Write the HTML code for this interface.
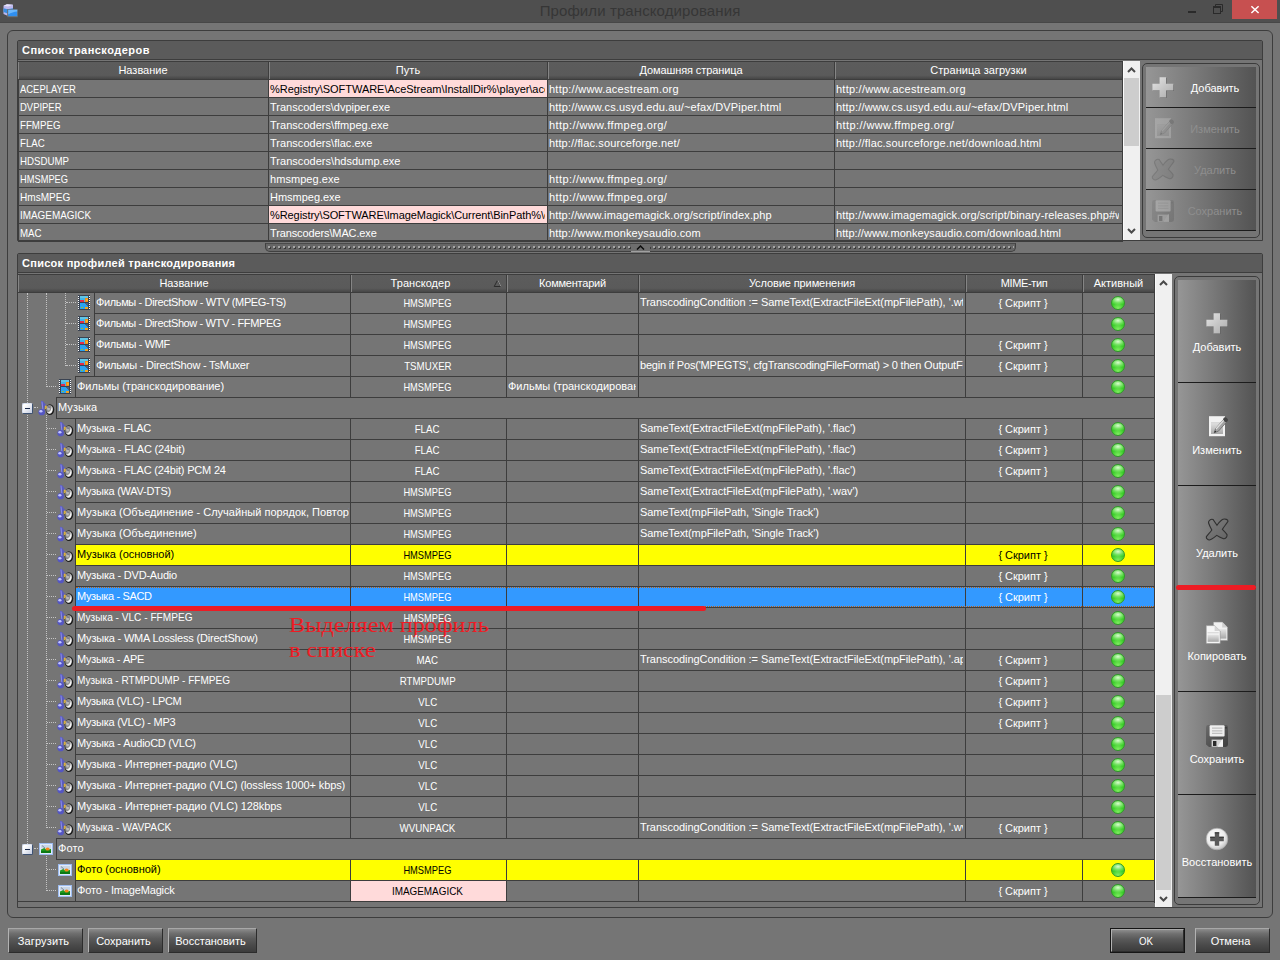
<!DOCTYPE html>
<html lang="ru"><head><meta charset="utf-8"><title>Профили транскодирования</title>
<style>
html,body{margin:0;padding:0}
body{width:1280px;height:960px;overflow:hidden;background:#757575;position:relative;font-family:"Liberation Sans",sans-serif;font-size:11px;color:#fff;line-height:13px}
div,span,svg{position:absolute;box-sizing:border-box}
.t{white-space:nowrap;overflow:hidden;height:14px}
.sx{position:static;display:inline-block}
.titlebar{left:0;top:0;width:1280px;height:23px;background:#4f4f4f;border-bottom:1px solid #474747}
.title{left:0;top:2px;width:1280px;text-align:center;font-size:15px;line-height:18px;color:#363636;height:20px;letter-spacing:.1px}
.gb{left:7px;top:30px;width:1266px;height:888px;border:1px solid #3d3d3d;border-radius:6px}
.panel{border:1px solid #3d3d3d;border-radius:2px 2px 0 0}
.ph{left:0;top:0;height:19px;background:#5b5b5b;border-bottom:1px solid #3d3d3d;font-weight:bold;color:#fff;line-height:18px;padding-left:4px;white-space:nowrap;letter-spacing:.47px}
.hd{background:linear-gradient(#5c5c5c 0,#5a5a5a 78%,#464646 100%);border-left:1px solid #858585;overflow:hidden}
.gl{background:#3d3d3d}
.cell{border:1px solid #3d3d3d;border-right:0;height:22px}
.pink{background:#ffdada}
.yel{background:#ffff00}
.sel{background:#3399ff}
.led{width:14px;height:14px;border-radius:50%;border:1px solid #2f9a28;background:radial-gradient(ellipse 70% 45% at 50% 22%,rgba(225,255,215,.95) 0,rgba(160,245,140,.5) 60%,rgba(255,255,255,0) 100%),radial-gradient(circle at 50% 95%,#84ee64 0,#3ecf2c 45%,#30bc20 100%)}
.sb{background:#f0f0f0;border-left:1px solid #fafafa}
.thumb{background:#cdcdcd}
.bf{border:1px solid #3b3b3b;border-radius:5px}
.bb{background:linear-gradient(90deg,#969696 0,#868686 25%,#797979 45%,#666 72%,#535353 100%)}
.bs{background:#1c1c1c;height:1px}
.btn{height:25px;top:928px;background:linear-gradient(#8c8c8c 0,#707070 18%,#5a5a5a 42%,#4a4a4a 70%,#3c3c3c 100%);border:1px solid;border-color:#a8a8a8 #2c2c2c #2c2c2c #b2b2b2}
.tl{border-left:1px dotted #c4c4c4;width:0}
.th{border-top:1px dotted #c4c4c4;height:0}
.red{background:#ed1c24;border-radius:3px}
.note{left:289px;top:613px;font-family:"Liberation Serif",serif;font-size:20px;line-height:25px;color:#ed1c24;white-space:nowrap;transform:scaleX(1.21);transform-origin:0 0;z-index:1}
.t{z-index:2}
.xb{width:11px;height:11px;border:1px solid;border-color:#d8e0f0 #3c5274 #3c5274 #d8e0f0;border-radius:2px;background:linear-gradient(135deg,#ffffff 20%,#c4cce0)}
</style></head><body>
<svg width="0" height="0" style="left:0;top:0"><defs>
<linearGradient id="dg" x1="0" y1="0" x2="1" y2="1"><stop offset="0" stop-color="#8a8a8a"/><stop offset=".55" stop-color="#e8e8e8"/><stop offset="1" stop-color="#fafafa"/></linearGradient>
<linearGradient id="pg" x1="0" y1="0" x2="1" y2="1"><stop offset="0" stop-color="#e4e4e4"/><stop offset="1" stop-color="#ababab"/></linearGradient>
<linearGradient id="gg" x1="0" y1="0" x2="0" y2="1"><stop offset="0" stop-color="#e6e6e6"/><stop offset="1" stop-color="#a8a8a8"/></linearGradient>
<linearGradient id="xg" x1="0" y1="0" x2="1" y2="1"><stop offset="0" stop-color="#7e7e7e"/><stop offset="1" stop-color="#646464"/></linearGradient>
<linearGradient id="fg" x1="0" y1="0" x2="1" y2="1"><stop offset="0" stop-color="#6a6a6a"/><stop offset="1" stop-color="#3e3e3e"/></linearGradient>
<radialGradient id="rg" cx=".42" cy=".38" r=".7"><stop offset="0" stop-color="#ffffff"/><stop offset=".6" stop-color="#ececec"/><stop offset="1" stop-color="#b4b4b4"/></radialGradient>
</defs></svg>

<div class="titlebar"></div>
<svg style="left:3px;top:3px" width="16" height="16" viewBox="0 0 16 16"><path d="M0.5 2.8 L4 1.3 L10 1.8 L10 11 L4.5 12.8 L0.5 11Z" fill="#bdb8ee"/><path d="M0.5 2.8 L4 1.3 L10 1.8 L5 3.6Z" fill="#e8e4fc"/><path d="M0.5 5.2 L4.5 6.2 L10 5.2 L10 9 L4.5 10.6 L0.5 9Z" fill="#3a8ee0"/><rect x="4.2" y="6.2" width="10.6" height="8" fill="#6e6e6c"/><rect x="5.2" y="6.8" width="9" height="6.4" fill="#2f8ff0"/><path d="M5.2 6.8 H14.2 V8.6 C11 8.8 8 10 5.2 11.5Z" fill="#7ac0ff" opacity=".8"/></svg>
<div class="title">Профили транскодирования</div>
<div style="left:1188px;top:11px;width:8px;height:2px;background:#2a2a2a"></div>
<svg style="left:1212px;top:3px" width="13" height="12" viewBox="0 0 13 12"><path d="M3.5 3 V1.5 H10.5 V8.5 H9" fill="none" stroke="#2a2a2a" stroke-width="1"/><rect x="1.5" y="3.5" width="7" height="7" fill="none" stroke="#2a2a2a" stroke-width="1"/><rect x="1" y="3" width="8" height="2" fill="#2a2a2a"/></svg>
<div style="left:1232px;top:0;width:45px;height:19px;background:#c75050"></div>
<svg style="left:1250px;top:5px" width="10" height="9" viewBox="0 0 10 9"><path d="M1.4 1.2 L8.6 8 M8.6 1.2 L1.4 8" stroke="#fff" stroke-width="1.5"/></svg>
<div class="gb"></div>
<div class="panel" style="left:17px;top:40px;width:1246px;height:201px"><div class="ph" style="width:1244px">Список транскодеров</div></div>
<div class="gl" style="left:18px;top:61px;width:1105px;height:1px"></div>
<div class="hd" style="left:18px;top:62px;width:251px;height:17px"><div class="t" style="left:-1px;top:2px;width:250px;text-align:center;">Название</div></div>
<div class="hd" style="left:269px;top:62px;width:279px;height:17px"><div class="t" style="left:-1px;top:2px;width:278px;text-align:center;letter-spacing:0.08px;">Путь</div></div>
<div class="gl" style="left:268px;top:61px;width:1px;height:18px"></div>
<div class="hd" style="left:548px;top:62px;width:287px;height:17px"><div class="t" style="left:-1px;top:2px;width:286px;text-align:center;letter-spacing:-0.10px;">Домашняя страница</div></div>
<div class="gl" style="left:547px;top:61px;width:1px;height:18px"></div>
<div class="hd" style="left:835px;top:62px;width:288px;height:17px"><div class="t" style="left:-1px;top:2px;width:287px;text-align:center;letter-spacing:0.06px;">Страница загрузки</div></div>
<div class="gl" style="left:834px;top:61px;width:1px;height:18px"></div>
<div class="gl" style="left:18px;top:79px;width:1105px;height:1px"></div>
<div class="gl" style="left:18px;top:79px;width:1px;height:161px"></div>
<div class="gl" style="left:18px;top:97px;width:1105px;height:1px"></div>
<div class="t" style="left:20px;top:83px;width:246px;"><span class="sx" style="transform:scaleX(0.857);transform-origin:0 50%">ACEPLAYER</span></div>
<div class="pink" style="left:269px;top:80px;width:278px;height:17px"></div>
<div class="t" style="left:270px;top:83px;width:275px;color:#000;letter-spacing:-0.04px;">%Registry\SOFTWARE\AceStream\InstallDir%\player\ace_player.exe</div>
<div class="t" style="left:549px;top:83px;width:282px;letter-spacing:0.24px;">http://www.acestream.org</div>
<div class="t" style="left:836px;top:83px;width:283px;letter-spacing:0.24px;">http://www.acestream.org</div>
<div class="gl" style="left:18px;top:115px;width:1105px;height:1px"></div>
<div class="t" style="left:20px;top:101px;width:246px;"><span class="sx" style="transform:scaleX(0.859);transform-origin:0 50%">DVPIPER</span></div>
<div class="t" style="left:270px;top:101px;width:274px;">Transcoders\dvpiper.exe</div>
<div class="t" style="left:549px;top:101px;width:282px;letter-spacing:0.16px;">http://www.cs.usyd.edu.au/~efax/DVPiper.html</div>
<div class="t" style="left:836px;top:101px;width:283px;letter-spacing:0.16px;">http://www.cs.usyd.edu.au/~efax/DVPiper.html</div>
<div class="gl" style="left:18px;top:133px;width:1105px;height:1px"></div>
<div class="t" style="left:20px;top:119px;width:246px;"><span class="sx" style="transform:scaleX(0.882);transform-origin:0 50%">FFMPEG</span></div>
<div class="t" style="left:270px;top:119px;width:274px;letter-spacing:0.03px;">Transcoders\ffmpeg.exe</div>
<div class="t" style="left:549px;top:119px;width:282px;letter-spacing:0.41px;">http://www.ffmpeg.org/</div>
<div class="t" style="left:836px;top:119px;width:283px;letter-spacing:0.41px;">http://www.ffmpeg.org/</div>
<div class="gl" style="left:18px;top:151px;width:1105px;height:1px"></div>
<div class="t" style="left:20px;top:137px;width:246px;"><span class="sx" style="transform:scaleX(0.882);transform-origin:0 50%">FLAC</span></div>
<div class="t" style="left:270px;top:137px;width:274px;letter-spacing:0.03px;">Transcoders\flac.exe</div>
<div class="t" style="left:549px;top:137px;width:282px;letter-spacing:0.13px;">http://flac.sourceforge.net/</div>
<div class="t" style="left:836px;top:137px;width:283px;letter-spacing:0.18px;">http://flac.sourceforge.net/download.html</div>
<div class="gl" style="left:18px;top:169px;width:1105px;height:1px"></div>
<div class="t" style="left:20px;top:155px;width:246px;"><span class="sx" style="transform:scaleX(0.882);transform-origin:0 50%">HDSDUMP</span></div>
<div class="t" style="left:270px;top:155px;width:274px;letter-spacing:0.03px;">Transcoders\hdsdump.exe</div>
<div class="gl" style="left:18px;top:187px;width:1105px;height:1px"></div>
<div class="t" style="left:20px;top:173px;width:246px;"><span class="sx" style="transform:scaleX(0.845);transform-origin:0 50%">HMSMPEG</span></div>
<div class="t" style="left:270px;top:173px;width:274px;letter-spacing:0.06px;">hmsmpeg.exe</div>
<div class="t" style="left:549px;top:173px;width:282px;letter-spacing:0.41px;">http://www.ffmpeg.org/</div>
<div class="gl" style="left:18px;top:205px;width:1105px;height:1px"></div>
<div class="t" style="left:20px;top:191px;width:246px;"><span class="sx" style="transform:scaleX(0.914);transform-origin:0 50%">HmsMPEG</span></div>
<div class="t" style="left:270px;top:191px;width:274px;letter-spacing:-0.02px;">Hmsmpeg.exe</div>
<div class="t" style="left:549px;top:191px;width:282px;letter-spacing:0.41px;">http://www.ffmpeg.org/</div>
<div class="gl" style="left:18px;top:223px;width:1105px;height:1px"></div>
<div class="t" style="left:20px;top:209px;width:246px;"><span class="sx" style="transform:scaleX(0.901);transform-origin:0 50%">IMAGEMAGICK</span></div>
<div class="pink" style="left:269px;top:206px;width:278px;height:17px"></div>
<div class="t" style="left:270px;top:209px;width:275px;color:#000;letter-spacing:-0.08px;">%Registry\SOFTWARE\ImageMagick\Current\BinPath%\convert.exe</div>
<div class="t" style="left:549px;top:209px;width:282px;letter-spacing:0.12px;">http://www.imagemagick.org/script/index.php</div>
<div class="t" style="left:836px;top:209px;width:283px;letter-spacing:0.12px;">http://www.imagemagick.org/script/binary-releases.php#windows</div>
<div class="gl" style="left:18px;top:241px;width:1105px;height:1px"></div>
<div class="t" style="left:20px;top:227px;width:246px;"><span class="sx" style="transform:scaleX(0.882);transform-origin:0 50%">MAC</span></div>
<div class="t" style="left:270px;top:227px;width:274px;letter-spacing:-0.12px;">Transcoders\MAC.exe</div>
<div class="t" style="left:549px;top:227px;width:282px;letter-spacing:0.12px;">http://www.monkeysaudio.com</div>
<div class="t" style="left:836px;top:227px;width:283px;letter-spacing:0.06px;">http://www.monkeysaudio.com/download.html</div>
<div class="gl" style="left:268px;top:80px;width:1px;height:160px"></div>
<div class="gl" style="left:547px;top:80px;width:1px;height:160px"></div>
<div class="gl" style="left:834px;top:80px;width:1px;height:160px"></div>
<div class="gl" style="left:1122px;top:61px;width:1px;height:179px"></div>
<div class="sb" style="left:1123px;top:61px;width:17px;height:179px"></div>
<div class="thumb" style="left:1124px;top:78px;width:15px;height:68px"></div>
<svg style="left:1127px;top:67px" width="9" height="6" viewBox="0 0 9 6"><path d="M1 5 L4.5 1.5 L8 5" fill="none" stroke="#4a4a4a" stroke-width="2"/></svg>
<svg style="left:1127px;top:228px" width="9" height="6" viewBox="0 0 9 6"><path d="M1 1 L4.5 4.5 L8 1" fill="none" stroke="#4a4a4a" stroke-width="2"/></svg>
<div class="bf" style="left:1142px;top:63px;width:118px;height:175px"></div>
<div class="bb" style="left:1146px;top:67px;width:110px;height:40px"></div><div class="bs" style="left:1146px;top:107px;width:110px"></div>
<div class="t" style="left:1175px;top:82px;width:80px;text-align:center;">Добавить</div>
<svg style="left:1151px;top:76px" width="24" height="24" viewBox="0 0 24 24" opacity="1"><path d="M8.6 1.2 H15 V7.8 H22.4 V14.4 H15 V21.4 H8.6 V14.4 H1.4 V7.8 H8.6Z" transform="translate(.5 .7)" fill="#5c5c5c"/><path d="M8.6 1.2 H15 V7.8 H22.4 V14.4 H15 V21.4 H8.6 V14.4 H1.4 V7.8 H8.6Z" fill="url(#pg)"/></svg>
<div class="bb" style="left:1146px;top:108px;width:110px;height:40px"></div><div class="bs" style="left:1146px;top:148px;width:110px"></div>
<div class="t" style="left:1175px;top:123px;width:80px;color:#8e8e8e;text-align:center;">Изменить</div>
<svg style="left:1151px;top:117px" width="24" height="24" viewBox="0 0 24 24" opacity="0.22"><rect x="4" y="1.2" width="16" height="20" fill="#f2f2f2"/><rect x="6" y="7" width="12" height="12" fill="url(#gg)"/><rect x="6" y="7" width="12" height="1.4" fill="#d8d8d8"/><path d="M9.2 17.8 L10.6 13.6 L18.6 4.4 L21.6 7 L13.4 16.2Z" fill="#a4a4a4" stroke="#5c5c5c" stroke-width=".7"/><path d="M11 14 L19 5" stroke="#e0e0e0" stroke-width="1.2"/><ellipse cx="20.6" cy="4.6" rx="2.6" ry="2" transform="rotate(40 20.6 4.6)" fill="#454545"/><path d="M9.2 17.8 L10 15.4 L11.4 16.8Z" fill="#2a2a2a"/></svg>
<div class="bb" style="left:1146px;top:149px;width:110px;height:40px"></div><div class="bs" style="left:1146px;top:189px;width:110px"></div>
<div class="t" style="left:1175px;top:164px;width:80px;color:#8e8e8e;text-align:center;">Удалить</div>
<svg style="left:1151px;top:158px" width="24" height="24" viewBox="0 0 24 24" opacity="0.22"><path d="M4 3 C5 1.5 7 1 8.2 1.6 L12 7.2 C13.6 5 16 2 18 1.2 C20.4 0.6 23 1.6 23 3.2 C21.6 5.6 18.8 9 17.4 11.4 C19 13 21 15 22 16.6 C22.4 18.8 20.4 21 18.6 20.8 C16.4 20 13.6 18.6 11.8 17.4 C9.8 19 7 21.6 4.6 22 C2.6 22 1 20.4 1.4 18.6 C3 16.6 5.4 14 6.8 12 C5.6 9.8 4.2 7 3.6 5 C3.5 4.2 3.6 3.6 4 3Z" fill="url(#xg)" stroke="#303030" stroke-width="1.1"/></svg>
<div class="bb" style="left:1146px;top:190px;width:110px;height:40px"></div><div class="bs" style="left:1146px;top:230px;width:110px"></div>
<div class="t" style="left:1175px;top:205px;width:80px;color:#8e8e8e;text-align:center;">Сохранить</div>
<svg style="left:1151px;top:199px" width="24" height="24" viewBox="0 0 24 24" opacity="0.22"><path d="M1 3.4 Q1 1 3.4 1 H20.6 Q23 1 23 3.4 V20.6 Q23 23 20.6 23 H4 L1 20.4Z" fill="url(#fg)"/><rect x="4.6" y="1.2" width="15" height="11.4" rx="1" fill="#efefef"/><path d="M7 4.2 H17.4 M7 6.8 H17.4 M7 9.4 H17.4" stroke="#c0c0c0" stroke-width="1.2"/><rect x="6.6" y="15.6" width="11.4" height="7.2" fill="#d4d4d4"/><rect x="8" y="17" width="3.4" height="5" fill="#2a2a2a"/><path d="M12.6 22.8 L17 15.6 H18 V22.8Z" fill="#f4f4f4"/><rect x="20.4" y="3" width="1.2" height="1.6" fill="#2e2e2e"/></svg>
<div style="left:265px;top:243px;width:751px;height:9px;background:#666;border:1px solid #404040;border-top-color:#4a4a4a;border-radius:0 0 5px 5px"></div>
<svg style="left:267px;top:245px" width="747" height="5"><defs><pattern id="dp" width="5" height="5" patternUnits="userSpaceOnUse"><rect x="2" y="2" width="2" height="2" fill="#3a3a3a"/><rect x="1" y="1" width="2" height="2" fill="#a4a4a4"/></pattern></defs><rect width="747" height="5" fill="url(#dp)"/></svg>
<div style="left:631px;top:244px;width:19px;height:8px;background:#6e6e6e;border-bottom:1px solid #a0a0a0"></div>
<svg style="left:636px;top:245px" width="9" height="5" viewBox="0 0 9 5"><path d="M1 4.6 L4.5 1 L8 4.6" fill="none" stroke="#0c0c0c" stroke-width="1.4"/></svg>
<div class="panel" style="left:17px;top:253px;width:1246px;height:655px"><div class="ph" style="width:1244px;letter-spacing:.27px">Список профилей транскодирования</div></div>
<div class="gl" style="left:18px;top:274px;width:1137px;height:1px"></div>
<div class="hd" style="left:18px;top:275px;width:333px;height:17px"><div class="t" style="left:-1px;top:2px;width:332px;text-align:center;">Название</div></div>
<div class="hd" style="left:351px;top:275px;width:156px;height:17px"><div class="t" style="left:-9px;top:2px;width:155px;text-align:center;letter-spacing:0.04px;">Транскодер</div><svg style="left:141px;top:4px" width="9" height="9" viewBox="0 0 9 9"><path d="M4.5 1.2 L7.8 7.5 H1.2Z" fill="none" stroke="#2c2c2c" stroke-width="1"/><path d="M4.8 1.2 L8 7.5" stroke="#8c8c8c" stroke-width="1" fill="none"/></svg></div>
<div class="gl" style="left:350px;top:274px;width:1px;height:18px"></div>
<div class="hd" style="left:507px;top:275px;width:132px;height:17px"><div class="t" style="left:-1px;top:2px;width:131px;text-align:center;letter-spacing:-0.22px;">Комментарий</div></div>
<div class="gl" style="left:506px;top:274px;width:1px;height:18px"></div>
<div class="hd" style="left:639px;top:275px;width:327px;height:17px"><div class="t" style="left:-1px;top:2px;width:326px;text-align:center;letter-spacing:-0.10px;">Условие применения</div></div>
<div class="gl" style="left:638px;top:274px;width:1px;height:18px"></div>
<div class="hd" style="left:966px;top:275px;width:117px;height:17px"><div class="t" style="left:-1px;top:2px;width:116px;text-align:center;letter-spacing:-0.36px;">MIME-тип</div></div>
<div class="gl" style="left:965px;top:274px;width:1px;height:18px"></div>
<div class="hd" style="left:1083px;top:275px;width:72px;height:17px"><div class="t" style="left:-1px;top:2px;width:71px;text-align:center;">Активный</div></div>
<div class="gl" style="left:1082px;top:274px;width:1px;height:18px"></div>
<div class="gl" style="left:18px;top:292px;width:1137px;height:1px"></div>
<div class="tl" style="left:27px;top:293px;height:110px"></div>
<div class="tl" style="left:27px;top:415px;height:429px"></div>
<div class="tl" style="left:46px;top:293px;height:94px"></div>
<div class="tl" style="left:46px;top:415px;height:413px"></div>
<div class="tl" style="left:46px;top:856px;height:35px"></div>
<div class="tl" style="left:65px;top:293px;height:73px"></div>
<div class="th" style="left:66px;top:302px;width:10px"></div>
<svg style="left:78px;top:295px" width="12" height="15" viewBox="0 0 12 15" shape-rendering="crispEdges"><rect width="12" height="15" fill="#3a4352"/><rect x="2" y="1" width="8" height="6" fill="#42b4ea"/><rect x="2" y="1" width="8" height="2" fill="#62c6e6"/><rect x="2" y="5" width="4" height="2" fill="#e22c48"/><rect x="7" y="3" width="3" height="4" fill="#f28c16"/><rect x="8" y="4" width="2" height="2" fill="#ffb020"/><rect x="2" y="8" width="8" height="6" fill="#2aa2f0"/><rect x="7" y="8" width="3" height="1" fill="#4a5f7c"/><rect x="8" y="9" width="2" height="1" fill="#4a5f7c"/><rect x="9" y="10" width="1" height="1" fill="#4a5f7c"/><rect x="7" y="12" width="3" height="2" fill="#f4a21a"/><rect x="3" y="12" width="2" height="1" fill="#8cbc48"/><g fill="#ffffff"><rect x="0" y="1" width="1" height="1"/><rect x="0" y="3" width="1" height="1"/><rect x="0" y="5" width="1" height="1"/><rect x="0" y="7" width="1" height="1"/><rect x="0" y="9" width="1" height="1"/><rect x="0" y="11" width="1" height="1"/><rect x="0" y="13" width="1" height="1"/><rect x="11" y="1" width="1" height="1"/><rect x="11" y="3" width="1" height="1"/><rect x="11" y="5" width="1" height="1"/><rect x="11" y="7" width="1" height="1"/><rect x="11" y="9" width="1" height="1"/><rect x="11" y="11" width="1" height="1"/><rect x="11" y="13" width="1" height="1"/></g></svg>
<div class="cell " style="left:94px;top:292px;width:257px"></div>
<div class="t" style="left:96px;top:296px;width:253px;letter-spacing:-0.37px;">Фильмы - DirectShow - WTV (MPEG-TS)</div>
<div class="cell " style="left:350px;top:292px;width:157px"></div>
<div class="t" style="left:349px;top:297px;width:157px;text-align:center;"><span class="sx" style="transform:scaleX(0.845);transform-origin:50% 50%">HMSMPEG</span></div>
<div class="cell " style="left:506px;top:292px;width:133px"></div>
<div class="cell " style="left:638px;top:292px;width:328px"></div>
<div class="t" style="left:640px;top:296px;width:323px;letter-spacing:-0.05px;">TranscodingCondition := SameText(ExtractFileExt(mpFilePath), &#x27;.wtv&#x27;)</div>
<div class="cell " style="left:965px;top:292px;width:118px"></div>
<div class="t" style="left:964px;top:297px;width:118px;text-align:center;letter-spacing:-0.03px;">{ Скрипт }</div>
<div class="cell " style="left:1082px;top:292px;width:73px"></div>
<span class="led" style="left:1111px;top:296px"></span>
<div class="th" style="left:66px;top:323px;width:10px"></div>
<svg style="left:78px;top:316px" width="12" height="15" viewBox="0 0 12 15" shape-rendering="crispEdges"><rect width="12" height="15" fill="#3a4352"/><rect x="2" y="1" width="8" height="6" fill="#42b4ea"/><rect x="2" y="1" width="8" height="2" fill="#62c6e6"/><rect x="2" y="5" width="4" height="2" fill="#e22c48"/><rect x="7" y="3" width="3" height="4" fill="#f28c16"/><rect x="8" y="4" width="2" height="2" fill="#ffb020"/><rect x="2" y="8" width="8" height="6" fill="#2aa2f0"/><rect x="7" y="8" width="3" height="1" fill="#4a5f7c"/><rect x="8" y="9" width="2" height="1" fill="#4a5f7c"/><rect x="9" y="10" width="1" height="1" fill="#4a5f7c"/><rect x="7" y="12" width="3" height="2" fill="#f4a21a"/><rect x="3" y="12" width="2" height="1" fill="#8cbc48"/><g fill="#ffffff"><rect x="0" y="1" width="1" height="1"/><rect x="0" y="3" width="1" height="1"/><rect x="0" y="5" width="1" height="1"/><rect x="0" y="7" width="1" height="1"/><rect x="0" y="9" width="1" height="1"/><rect x="0" y="11" width="1" height="1"/><rect x="0" y="13" width="1" height="1"/><rect x="11" y="1" width="1" height="1"/><rect x="11" y="3" width="1" height="1"/><rect x="11" y="5" width="1" height="1"/><rect x="11" y="7" width="1" height="1"/><rect x="11" y="9" width="1" height="1"/><rect x="11" y="11" width="1" height="1"/><rect x="11" y="13" width="1" height="1"/></g></svg>
<div class="cell " style="left:94px;top:313px;width:257px"></div>
<div class="t" style="left:96px;top:317px;width:253px;letter-spacing:-0.38px;">Фильмы - DirectShow - WTV - FFMPEG</div>
<div class="cell " style="left:350px;top:313px;width:157px"></div>
<div class="t" style="left:349px;top:318px;width:157px;text-align:center;"><span class="sx" style="transform:scaleX(0.845);transform-origin:50% 50%">HMSMPEG</span></div>
<div class="cell " style="left:506px;top:313px;width:133px"></div>
<div class="cell " style="left:638px;top:313px;width:328px"></div>
<div class="cell " style="left:965px;top:313px;width:118px"></div>
<div class="cell " style="left:1082px;top:313px;width:73px"></div>
<span class="led" style="left:1111px;top:317px"></span>
<div class="th" style="left:66px;top:344px;width:10px"></div>
<svg style="left:78px;top:337px" width="12" height="15" viewBox="0 0 12 15" shape-rendering="crispEdges"><rect width="12" height="15" fill="#3a4352"/><rect x="2" y="1" width="8" height="6" fill="#42b4ea"/><rect x="2" y="1" width="8" height="2" fill="#62c6e6"/><rect x="2" y="5" width="4" height="2" fill="#e22c48"/><rect x="7" y="3" width="3" height="4" fill="#f28c16"/><rect x="8" y="4" width="2" height="2" fill="#ffb020"/><rect x="2" y="8" width="8" height="6" fill="#2aa2f0"/><rect x="7" y="8" width="3" height="1" fill="#4a5f7c"/><rect x="8" y="9" width="2" height="1" fill="#4a5f7c"/><rect x="9" y="10" width="1" height="1" fill="#4a5f7c"/><rect x="7" y="12" width="3" height="2" fill="#f4a21a"/><rect x="3" y="12" width="2" height="1" fill="#8cbc48"/><g fill="#ffffff"><rect x="0" y="1" width="1" height="1"/><rect x="0" y="3" width="1" height="1"/><rect x="0" y="5" width="1" height="1"/><rect x="0" y="7" width="1" height="1"/><rect x="0" y="9" width="1" height="1"/><rect x="0" y="11" width="1" height="1"/><rect x="0" y="13" width="1" height="1"/><rect x="11" y="1" width="1" height="1"/><rect x="11" y="3" width="1" height="1"/><rect x="11" y="5" width="1" height="1"/><rect x="11" y="7" width="1" height="1"/><rect x="11" y="9" width="1" height="1"/><rect x="11" y="11" width="1" height="1"/><rect x="11" y="13" width="1" height="1"/></g></svg>
<div class="cell " style="left:94px;top:334px;width:257px"></div>
<div class="t" style="left:96px;top:338px;width:253px;letter-spacing:-0.35px;">Фильмы - WMF</div>
<div class="cell " style="left:350px;top:334px;width:157px"></div>
<div class="t" style="left:349px;top:339px;width:157px;text-align:center;"><span class="sx" style="transform:scaleX(0.845);transform-origin:50% 50%">HMSMPEG</span></div>
<div class="cell " style="left:506px;top:334px;width:133px"></div>
<div class="cell " style="left:638px;top:334px;width:328px"></div>
<div class="cell " style="left:965px;top:334px;width:118px"></div>
<div class="t" style="left:964px;top:339px;width:118px;text-align:center;letter-spacing:-0.03px;">{ Скрипт }</div>
<div class="cell " style="left:1082px;top:334px;width:73px"></div>
<span class="led" style="left:1111px;top:338px"></span>
<div class="th" style="left:66px;top:365px;width:10px"></div>
<svg style="left:78px;top:358px" width="12" height="15" viewBox="0 0 12 15" shape-rendering="crispEdges"><rect width="12" height="15" fill="#3a4352"/><rect x="2" y="1" width="8" height="6" fill="#42b4ea"/><rect x="2" y="1" width="8" height="2" fill="#62c6e6"/><rect x="2" y="5" width="4" height="2" fill="#e22c48"/><rect x="7" y="3" width="3" height="4" fill="#f28c16"/><rect x="8" y="4" width="2" height="2" fill="#ffb020"/><rect x="2" y="8" width="8" height="6" fill="#2aa2f0"/><rect x="7" y="8" width="3" height="1" fill="#4a5f7c"/><rect x="8" y="9" width="2" height="1" fill="#4a5f7c"/><rect x="9" y="10" width="1" height="1" fill="#4a5f7c"/><rect x="7" y="12" width="3" height="2" fill="#f4a21a"/><rect x="3" y="12" width="2" height="1" fill="#8cbc48"/><g fill="#ffffff"><rect x="0" y="1" width="1" height="1"/><rect x="0" y="3" width="1" height="1"/><rect x="0" y="5" width="1" height="1"/><rect x="0" y="7" width="1" height="1"/><rect x="0" y="9" width="1" height="1"/><rect x="0" y="11" width="1" height="1"/><rect x="0" y="13" width="1" height="1"/><rect x="11" y="1" width="1" height="1"/><rect x="11" y="3" width="1" height="1"/><rect x="11" y="5" width="1" height="1"/><rect x="11" y="7" width="1" height="1"/><rect x="11" y="9" width="1" height="1"/><rect x="11" y="11" width="1" height="1"/><rect x="11" y="13" width="1" height="1"/></g></svg>
<div class="cell " style="left:94px;top:355px;width:257px"></div>
<div class="t" style="left:96px;top:359px;width:253px;letter-spacing:-0.21px;">Фильмы - DirectShow - TsMuxer</div>
<div class="cell " style="left:350px;top:355px;width:157px"></div>
<div class="t" style="left:349px;top:360px;width:157px;text-align:center;"><span class="sx" style="transform:scaleX(0.882);transform-origin:50% 50%">TSMUXER</span></div>
<div class="cell " style="left:506px;top:355px;width:133px"></div>
<div class="cell " style="left:638px;top:355px;width:328px"></div>
<div class="t" style="left:640px;top:359px;width:323px;letter-spacing:-0.19px;">begin if Pos(&#x27;MPEGTS&#x27;, cfgTranscodingFileFormat) &gt; 0 then OutputFileName</div>
<div class="cell " style="left:965px;top:355px;width:118px"></div>
<div class="t" style="left:964px;top:360px;width:118px;text-align:center;letter-spacing:-0.03px;">{ Скрипт }</div>
<div class="cell " style="left:1082px;top:355px;width:73px"></div>
<span class="led" style="left:1111px;top:359px"></span>
<div class="th" style="left:47px;top:386px;width:9px"></div>
<svg style="left:59px;top:379px" width="12" height="15" viewBox="0 0 12 15" shape-rendering="crispEdges"><rect width="12" height="15" fill="#3a4352"/><rect x="2" y="1" width="8" height="6" fill="#42b4ea"/><rect x="2" y="1" width="8" height="2" fill="#62c6e6"/><rect x="2" y="5" width="4" height="2" fill="#e22c48"/><rect x="7" y="3" width="3" height="4" fill="#f28c16"/><rect x="8" y="4" width="2" height="2" fill="#ffb020"/><rect x="2" y="8" width="8" height="6" fill="#2aa2f0"/><rect x="7" y="8" width="3" height="1" fill="#4a5f7c"/><rect x="8" y="9" width="2" height="1" fill="#4a5f7c"/><rect x="9" y="10" width="1" height="1" fill="#4a5f7c"/><rect x="7" y="12" width="3" height="2" fill="#f4a21a"/><rect x="3" y="12" width="2" height="1" fill="#8cbc48"/><g fill="#ffffff"><rect x="0" y="1" width="1" height="1"/><rect x="0" y="3" width="1" height="1"/><rect x="0" y="5" width="1" height="1"/><rect x="0" y="7" width="1" height="1"/><rect x="0" y="9" width="1" height="1"/><rect x="0" y="11" width="1" height="1"/><rect x="0" y="13" width="1" height="1"/><rect x="11" y="1" width="1" height="1"/><rect x="11" y="3" width="1" height="1"/><rect x="11" y="5" width="1" height="1"/><rect x="11" y="7" width="1" height="1"/><rect x="11" y="9" width="1" height="1"/><rect x="11" y="11" width="1" height="1"/><rect x="11" y="13" width="1" height="1"/></g></svg>
<div class="cell " style="left:75px;top:376px;width:276px"></div>
<div class="t" style="left:77px;top:380px;width:272px;">Фильмы (транскодирование)</div>
<div class="cell " style="left:350px;top:376px;width:157px"></div>
<div class="t" style="left:349px;top:381px;width:157px;text-align:center;"><span class="sx" style="transform:scaleX(0.845);transform-origin:50% 50%">HMSMPEG</span></div>
<div class="cell " style="left:506px;top:376px;width:133px"></div>
<div class="t" style="left:508px;top:380px;width:128px;">Фильмы (транскодирование)</div>
<div class="cell " style="left:638px;top:376px;width:328px"></div>
<div class="cell " style="left:965px;top:376px;width:118px"></div>
<div class="cell " style="left:1082px;top:376px;width:73px"></div>
<span class="led" style="left:1111px;top:380px"></span>
<div class="th" style="left:34px;top:407px;width:4px"></div>
<svg style="left:38px;top:400px" width="17" height="16" viewBox="0 0 17 16"><ellipse cx="11.9" cy="9.6" rx="4.3" ry="5.4" fill="#1c1c1c"/><ellipse cx="11.4" cy="9.2" rx="3.2" ry="4.3" fill="#8e8e8e"/><path d="M13.6 6 C15.4 8 15 12 12.4 13.6 C10.8 14 9.4 13 9 12 C11 13 13.6 11 13.6 6Z" fill="#f4f4f4"/><ellipse cx="10.6" cy="8.4" rx="1.5" ry="2" fill="#b8b8b8"/><path d="M9.8 6.6 C10.8 6 12 6.8 12 8.4 C11.4 7.4 10.6 7.2 9.8 7.6Z" fill="#50507a"/><path d="M2.9 0.8 L5.2 1.2 C6 3.2 8.2 4.2 8.6 6.2 C8.8 7.6 8 8.6 7.2 9.2 C7.4 7.6 6.8 6.2 5.8 5.8 L6.5 12.4 L4.3 12.8 Z" fill="#5a5cc0"/><path d="M4 1.6 L5 11" stroke="#8a8ce8" stroke-width="1"/><path d="M7.4 5.8 C8.4 6.8 8.2 8 7.4 8.8" stroke="#f6c22a" stroke-width="1.3" fill="none"/><ellipse cx="3.7" cy="12.2" rx="3.3" ry="3.1" fill="#5456c2"/><ellipse cx="2.9" cy="11.2" rx="1.6" ry="1.3" fill="#c4c6ff"/></svg>
<div class="xb" style="left:22px;top:403px"></div><div style="left:25px;top:408px;width:5px;height:1px;background:#1a2a4a"></div>
<div class="cell" style="left:56px;top:397px;width:1099px"></div>
<div class="t" style="left:58px;top:401px;width:200px;letter-spacing:0.05px;">Музыка</div>
<div class="th" style="left:47px;top:428px;width:9px"></div>
<svg style="left:57px;top:421px" width="17" height="16" viewBox="0 0 17 16"><ellipse cx="11.9" cy="9.6" rx="4.3" ry="5.4" fill="#1c1c1c"/><ellipse cx="11.4" cy="9.2" rx="3.2" ry="4.3" fill="#8e8e8e"/><path d="M13.6 6 C15.4 8 15 12 12.4 13.6 C10.8 14 9.4 13 9 12 C11 13 13.6 11 13.6 6Z" fill="#f4f4f4"/><ellipse cx="10.6" cy="8.4" rx="1.5" ry="2" fill="#b8b8b8"/><path d="M9.8 6.6 C10.8 6 12 6.8 12 8.4 C11.4 7.4 10.6 7.2 9.8 7.6Z" fill="#50507a"/><path d="M2.9 0.8 L5.2 1.2 C6 3.2 8.2 4.2 8.6 6.2 C8.8 7.6 8 8.6 7.2 9.2 C7.4 7.6 6.8 6.2 5.8 5.8 L6.5 12.4 L4.3 12.8 Z" fill="#5a5cc0"/><path d="M4 1.6 L5 11" stroke="#8a8ce8" stroke-width="1"/><path d="M7.4 5.8 C8.4 6.8 8.2 8 7.4 8.8" stroke="#f6c22a" stroke-width="1.3" fill="none"/><ellipse cx="3.7" cy="12.2" rx="3.3" ry="3.1" fill="#5456c2"/><ellipse cx="2.9" cy="11.2" rx="1.6" ry="1.3" fill="#c4c6ff"/></svg>
<div class="cell " style="left:75px;top:418px;width:276px"></div>
<div class="t" style="left:77px;top:422px;width:272px;letter-spacing:-0.21px;">Музыка - FLAC</div>
<div class="cell " style="left:350px;top:418px;width:157px"></div>
<div class="t" style="left:349px;top:423px;width:157px;text-align:center;"><span class="sx" style="transform:scaleX(0.882);transform-origin:50% 50%">FLAC</span></div>
<div class="cell " style="left:506px;top:418px;width:133px"></div>
<div class="cell " style="left:638px;top:418px;width:328px"></div>
<div class="t" style="left:640px;top:422px;width:323px;letter-spacing:-0.04px;">SameText(ExtractFileExt(mpFilePath), &#x27;.flac&#x27;)</div>
<div class="cell " style="left:965px;top:418px;width:118px"></div>
<div class="t" style="left:964px;top:423px;width:118px;text-align:center;letter-spacing:-0.03px;">{ Скрипт }</div>
<div class="cell " style="left:1082px;top:418px;width:73px"></div>
<span class="led" style="left:1111px;top:422px"></span>
<div class="th" style="left:47px;top:449px;width:9px"></div>
<svg style="left:57px;top:442px" width="17" height="16" viewBox="0 0 17 16"><ellipse cx="11.9" cy="9.6" rx="4.3" ry="5.4" fill="#1c1c1c"/><ellipse cx="11.4" cy="9.2" rx="3.2" ry="4.3" fill="#8e8e8e"/><path d="M13.6 6 C15.4 8 15 12 12.4 13.6 C10.8 14 9.4 13 9 12 C11 13 13.6 11 13.6 6Z" fill="#f4f4f4"/><ellipse cx="10.6" cy="8.4" rx="1.5" ry="2" fill="#b8b8b8"/><path d="M9.8 6.6 C10.8 6 12 6.8 12 8.4 C11.4 7.4 10.6 7.2 9.8 7.6Z" fill="#50507a"/><path d="M2.9 0.8 L5.2 1.2 C6 3.2 8.2 4.2 8.6 6.2 C8.8 7.6 8 8.6 7.2 9.2 C7.4 7.6 6.8 6.2 5.8 5.8 L6.5 12.4 L4.3 12.8 Z" fill="#5a5cc0"/><path d="M4 1.6 L5 11" stroke="#8a8ce8" stroke-width="1"/><path d="M7.4 5.8 C8.4 6.8 8.2 8 7.4 8.8" stroke="#f6c22a" stroke-width="1.3" fill="none"/><ellipse cx="3.7" cy="12.2" rx="3.3" ry="3.1" fill="#5456c2"/><ellipse cx="2.9" cy="11.2" rx="1.6" ry="1.3" fill="#c4c6ff"/></svg>
<div class="cell " style="left:75px;top:439px;width:276px"></div>
<div class="t" style="left:77px;top:443px;width:272px;letter-spacing:-0.16px;">Музыка - FLAC (24bit)</div>
<div class="cell " style="left:350px;top:439px;width:157px"></div>
<div class="t" style="left:349px;top:444px;width:157px;text-align:center;"><span class="sx" style="transform:scaleX(0.882);transform-origin:50% 50%">FLAC</span></div>
<div class="cell " style="left:506px;top:439px;width:133px"></div>
<div class="cell " style="left:638px;top:439px;width:328px"></div>
<div class="t" style="left:640px;top:443px;width:323px;letter-spacing:-0.04px;">SameText(ExtractFileExt(mpFilePath), &#x27;.flac&#x27;)</div>
<div class="cell " style="left:965px;top:439px;width:118px"></div>
<div class="t" style="left:964px;top:444px;width:118px;text-align:center;letter-spacing:-0.03px;">{ Скрипт }</div>
<div class="cell " style="left:1082px;top:439px;width:73px"></div>
<span class="led" style="left:1111px;top:443px"></span>
<div class="th" style="left:47px;top:470px;width:9px"></div>
<svg style="left:57px;top:463px" width="17" height="16" viewBox="0 0 17 16"><ellipse cx="11.9" cy="9.6" rx="4.3" ry="5.4" fill="#1c1c1c"/><ellipse cx="11.4" cy="9.2" rx="3.2" ry="4.3" fill="#8e8e8e"/><path d="M13.6 6 C15.4 8 15 12 12.4 13.6 C10.8 14 9.4 13 9 12 C11 13 13.6 11 13.6 6Z" fill="#f4f4f4"/><ellipse cx="10.6" cy="8.4" rx="1.5" ry="2" fill="#b8b8b8"/><path d="M9.8 6.6 C10.8 6 12 6.8 12 8.4 C11.4 7.4 10.6 7.2 9.8 7.6Z" fill="#50507a"/><path d="M2.9 0.8 L5.2 1.2 C6 3.2 8.2 4.2 8.6 6.2 C8.8 7.6 8 8.6 7.2 9.2 C7.4 7.6 6.8 6.2 5.8 5.8 L6.5 12.4 L4.3 12.8 Z" fill="#5a5cc0"/><path d="M4 1.6 L5 11" stroke="#8a8ce8" stroke-width="1"/><path d="M7.4 5.8 C8.4 6.8 8.2 8 7.4 8.8" stroke="#f6c22a" stroke-width="1.3" fill="none"/><ellipse cx="3.7" cy="12.2" rx="3.3" ry="3.1" fill="#5456c2"/><ellipse cx="2.9" cy="11.2" rx="1.6" ry="1.3" fill="#c4c6ff"/></svg>
<div class="cell " style="left:75px;top:460px;width:276px"></div>
<div class="t" style="left:77px;top:464px;width:272px;letter-spacing:-0.18px;">Музыка - FLAC (24bit) PCM 24</div>
<div class="cell " style="left:350px;top:460px;width:157px"></div>
<div class="t" style="left:349px;top:465px;width:157px;text-align:center;"><span class="sx" style="transform:scaleX(0.882);transform-origin:50% 50%">FLAC</span></div>
<div class="cell " style="left:506px;top:460px;width:133px"></div>
<div class="cell " style="left:638px;top:460px;width:328px"></div>
<div class="t" style="left:640px;top:464px;width:323px;letter-spacing:-0.04px;">SameText(ExtractFileExt(mpFilePath), &#x27;.flac&#x27;)</div>
<div class="cell " style="left:965px;top:460px;width:118px"></div>
<div class="t" style="left:964px;top:465px;width:118px;text-align:center;letter-spacing:-0.03px;">{ Скрипт }</div>
<div class="cell " style="left:1082px;top:460px;width:73px"></div>
<span class="led" style="left:1111px;top:464px"></span>
<div class="th" style="left:47px;top:491px;width:9px"></div>
<svg style="left:57px;top:484px" width="17" height="16" viewBox="0 0 17 16"><ellipse cx="11.9" cy="9.6" rx="4.3" ry="5.4" fill="#1c1c1c"/><ellipse cx="11.4" cy="9.2" rx="3.2" ry="4.3" fill="#8e8e8e"/><path d="M13.6 6 C15.4 8 15 12 12.4 13.6 C10.8 14 9.4 13 9 12 C11 13 13.6 11 13.6 6Z" fill="#f4f4f4"/><ellipse cx="10.6" cy="8.4" rx="1.5" ry="2" fill="#b8b8b8"/><path d="M9.8 6.6 C10.8 6 12 6.8 12 8.4 C11.4 7.4 10.6 7.2 9.8 7.6Z" fill="#50507a"/><path d="M2.9 0.8 L5.2 1.2 C6 3.2 8.2 4.2 8.6 6.2 C8.8 7.6 8 8.6 7.2 9.2 C7.4 7.6 6.8 6.2 5.8 5.8 L6.5 12.4 L4.3 12.8 Z" fill="#5a5cc0"/><path d="M4 1.6 L5 11" stroke="#8a8ce8" stroke-width="1"/><path d="M7.4 5.8 C8.4 6.8 8.2 8 7.4 8.8" stroke="#f6c22a" stroke-width="1.3" fill="none"/><ellipse cx="3.7" cy="12.2" rx="3.3" ry="3.1" fill="#5456c2"/><ellipse cx="2.9" cy="11.2" rx="1.6" ry="1.3" fill="#c4c6ff"/></svg>
<div class="cell " style="left:75px;top:481px;width:276px"></div>
<div class="t" style="left:77px;top:485px;width:272px;letter-spacing:-0.26px;">Музыка (WAV-DTS)</div>
<div class="cell " style="left:350px;top:481px;width:157px"></div>
<div class="t" style="left:349px;top:486px;width:157px;text-align:center;"><span class="sx" style="transform:scaleX(0.845);transform-origin:50% 50%">HMSMPEG</span></div>
<div class="cell " style="left:506px;top:481px;width:133px"></div>
<div class="cell " style="left:638px;top:481px;width:328px"></div>
<div class="t" style="left:640px;top:485px;width:323px;letter-spacing:-0.04px;">SameText(ExtractFileExt(mpFilePath), &#x27;.wav&#x27;)</div>
<div class="cell " style="left:965px;top:481px;width:118px"></div>
<div class="cell " style="left:1082px;top:481px;width:73px"></div>
<span class="led" style="left:1111px;top:485px"></span>
<div class="th" style="left:47px;top:512px;width:9px"></div>
<svg style="left:57px;top:505px" width="17" height="16" viewBox="0 0 17 16"><ellipse cx="11.9" cy="9.6" rx="4.3" ry="5.4" fill="#1c1c1c"/><ellipse cx="11.4" cy="9.2" rx="3.2" ry="4.3" fill="#8e8e8e"/><path d="M13.6 6 C15.4 8 15 12 12.4 13.6 C10.8 14 9.4 13 9 12 C11 13 13.6 11 13.6 6Z" fill="#f4f4f4"/><ellipse cx="10.6" cy="8.4" rx="1.5" ry="2" fill="#b8b8b8"/><path d="M9.8 6.6 C10.8 6 12 6.8 12 8.4 C11.4 7.4 10.6 7.2 9.8 7.6Z" fill="#50507a"/><path d="M2.9 0.8 L5.2 1.2 C6 3.2 8.2 4.2 8.6 6.2 C8.8 7.6 8 8.6 7.2 9.2 C7.4 7.6 6.8 6.2 5.8 5.8 L6.5 12.4 L4.3 12.8 Z" fill="#5a5cc0"/><path d="M4 1.6 L5 11" stroke="#8a8ce8" stroke-width="1"/><path d="M7.4 5.8 C8.4 6.8 8.2 8 7.4 8.8" stroke="#f6c22a" stroke-width="1.3" fill="none"/><ellipse cx="3.7" cy="12.2" rx="3.3" ry="3.1" fill="#5456c2"/><ellipse cx="2.9" cy="11.2" rx="1.6" ry="1.3" fill="#c4c6ff"/></svg>
<div class="cell " style="left:75px;top:502px;width:276px"></div>
<div class="t" style="left:77px;top:506px;width:272px;letter-spacing:0.02px;">Музыка (Объединение - Случайный порядок, Повтор)</div>
<div class="cell " style="left:350px;top:502px;width:157px"></div>
<div class="t" style="left:349px;top:507px;width:157px;text-align:center;"><span class="sx" style="transform:scaleX(0.845);transform-origin:50% 50%">HMSMPEG</span></div>
<div class="cell " style="left:506px;top:502px;width:133px"></div>
<div class="cell " style="left:638px;top:502px;width:328px"></div>
<div class="t" style="left:640px;top:506px;width:323px;letter-spacing:-0.11px;">SameText(mpFilePath, &#x27;Single Track&#x27;)</div>
<div class="cell " style="left:965px;top:502px;width:118px"></div>
<div class="cell " style="left:1082px;top:502px;width:73px"></div>
<span class="led" style="left:1111px;top:506px"></span>
<div class="th" style="left:47px;top:533px;width:9px"></div>
<svg style="left:57px;top:526px" width="17" height="16" viewBox="0 0 17 16"><ellipse cx="11.9" cy="9.6" rx="4.3" ry="5.4" fill="#1c1c1c"/><ellipse cx="11.4" cy="9.2" rx="3.2" ry="4.3" fill="#8e8e8e"/><path d="M13.6 6 C15.4 8 15 12 12.4 13.6 C10.8 14 9.4 13 9 12 C11 13 13.6 11 13.6 6Z" fill="#f4f4f4"/><ellipse cx="10.6" cy="8.4" rx="1.5" ry="2" fill="#b8b8b8"/><path d="M9.8 6.6 C10.8 6 12 6.8 12 8.4 C11.4 7.4 10.6 7.2 9.8 7.6Z" fill="#50507a"/><path d="M2.9 0.8 L5.2 1.2 C6 3.2 8.2 4.2 8.6 6.2 C8.8 7.6 8 8.6 7.2 9.2 C7.4 7.6 6.8 6.2 5.8 5.8 L6.5 12.4 L4.3 12.8 Z" fill="#5a5cc0"/><path d="M4 1.6 L5 11" stroke="#8a8ce8" stroke-width="1"/><path d="M7.4 5.8 C8.4 6.8 8.2 8 7.4 8.8" stroke="#f6c22a" stroke-width="1.3" fill="none"/><ellipse cx="3.7" cy="12.2" rx="3.3" ry="3.1" fill="#5456c2"/><ellipse cx="2.9" cy="11.2" rx="1.6" ry="1.3" fill="#c4c6ff"/></svg>
<div class="cell " style="left:75px;top:523px;width:276px"></div>
<div class="t" style="left:77px;top:527px;width:272px;">Музыка (Объединение)</div>
<div class="cell " style="left:350px;top:523px;width:157px"></div>
<div class="t" style="left:349px;top:528px;width:157px;text-align:center;"><span class="sx" style="transform:scaleX(0.845);transform-origin:50% 50%">HMSMPEG</span></div>
<div class="cell " style="left:506px;top:523px;width:133px"></div>
<div class="cell " style="left:638px;top:523px;width:328px"></div>
<div class="t" style="left:640px;top:527px;width:323px;letter-spacing:-0.11px;">SameText(mpFilePath, &#x27;Single Track&#x27;)</div>
<div class="cell " style="left:965px;top:523px;width:118px"></div>
<div class="cell " style="left:1082px;top:523px;width:73px"></div>
<span class="led" style="left:1111px;top:527px"></span>
<div class="th" style="left:47px;top:554px;width:9px"></div>
<svg style="left:57px;top:547px" width="17" height="16" viewBox="0 0 17 16"><ellipse cx="11.9" cy="9.6" rx="4.3" ry="5.4" fill="#1c1c1c"/><ellipse cx="11.4" cy="9.2" rx="3.2" ry="4.3" fill="#8e8e8e"/><path d="M13.6 6 C15.4 8 15 12 12.4 13.6 C10.8 14 9.4 13 9 12 C11 13 13.6 11 13.6 6Z" fill="#f4f4f4"/><ellipse cx="10.6" cy="8.4" rx="1.5" ry="2" fill="#b8b8b8"/><path d="M9.8 6.6 C10.8 6 12 6.8 12 8.4 C11.4 7.4 10.6 7.2 9.8 7.6Z" fill="#50507a"/><path d="M2.9 0.8 L5.2 1.2 C6 3.2 8.2 4.2 8.6 6.2 C8.8 7.6 8 8.6 7.2 9.2 C7.4 7.6 6.8 6.2 5.8 5.8 L6.5 12.4 L4.3 12.8 Z" fill="#5a5cc0"/><path d="M4 1.6 L5 11" stroke="#8a8ce8" stroke-width="1"/><path d="M7.4 5.8 C8.4 6.8 8.2 8 7.4 8.8" stroke="#f6c22a" stroke-width="1.3" fill="none"/><ellipse cx="3.7" cy="12.2" rx="3.3" ry="3.1" fill="#5456c2"/><ellipse cx="2.9" cy="11.2" rx="1.6" ry="1.3" fill="#c4c6ff"/></svg>
<div class="cell yel" style="left:75px;top:544px;width:276px"></div>
<div class="t" style="left:77px;top:548px;width:272px;color:#000;">Музыка (основной)</div>
<div class="cell yel" style="left:350px;top:544px;width:157px"></div>
<div class="t" style="left:349px;top:549px;width:157px;color:#000;text-align:center;"><span class="sx" style="transform:scaleX(0.845);transform-origin:50% 50%">HMSMPEG</span></div>
<div class="cell yel" style="left:506px;top:544px;width:133px"></div>
<div class="cell yel" style="left:638px;top:544px;width:328px"></div>
<div class="cell yel" style="left:965px;top:544px;width:118px"></div>
<div class="t" style="left:964px;top:549px;width:118px;color:#000;text-align:center;letter-spacing:-0.03px;">{ Скрипт }</div>
<div class="cell yel" style="left:1082px;top:544px;width:73px"></div>
<span class="led" style="left:1111px;top:548px"></span>
<div class="th" style="left:47px;top:575px;width:9px"></div>
<svg style="left:57px;top:568px" width="17" height="16" viewBox="0 0 17 16"><ellipse cx="11.9" cy="9.6" rx="4.3" ry="5.4" fill="#1c1c1c"/><ellipse cx="11.4" cy="9.2" rx="3.2" ry="4.3" fill="#8e8e8e"/><path d="M13.6 6 C15.4 8 15 12 12.4 13.6 C10.8 14 9.4 13 9 12 C11 13 13.6 11 13.6 6Z" fill="#f4f4f4"/><ellipse cx="10.6" cy="8.4" rx="1.5" ry="2" fill="#b8b8b8"/><path d="M9.8 6.6 C10.8 6 12 6.8 12 8.4 C11.4 7.4 10.6 7.2 9.8 7.6Z" fill="#50507a"/><path d="M2.9 0.8 L5.2 1.2 C6 3.2 8.2 4.2 8.6 6.2 C8.8 7.6 8 8.6 7.2 9.2 C7.4 7.6 6.8 6.2 5.8 5.8 L6.5 12.4 L4.3 12.8 Z" fill="#5a5cc0"/><path d="M4 1.6 L5 11" stroke="#8a8ce8" stroke-width="1"/><path d="M7.4 5.8 C8.4 6.8 8.2 8 7.4 8.8" stroke="#f6c22a" stroke-width="1.3" fill="none"/><ellipse cx="3.7" cy="12.2" rx="3.3" ry="3.1" fill="#5456c2"/><ellipse cx="2.9" cy="11.2" rx="1.6" ry="1.3" fill="#c4c6ff"/></svg>
<div class="cell " style="left:75px;top:565px;width:276px"></div>
<div class="t" style="left:77px;top:569px;width:272px;letter-spacing:-0.21px;">Музыка - DVD-Audio</div>
<div class="cell " style="left:350px;top:565px;width:157px"></div>
<div class="t" style="left:349px;top:570px;width:157px;text-align:center;"><span class="sx" style="transform:scaleX(0.845);transform-origin:50% 50%">HMSMPEG</span></div>
<div class="cell " style="left:506px;top:565px;width:133px"></div>
<div class="cell " style="left:638px;top:565px;width:328px"></div>
<div class="cell " style="left:965px;top:565px;width:118px"></div>
<div class="t" style="left:964px;top:570px;width:118px;text-align:center;letter-spacing:-0.03px;">{ Скрипт }</div>
<div class="cell " style="left:1082px;top:565px;width:73px"></div>
<span class="led" style="left:1111px;top:569px"></span>
<div class="th" style="left:47px;top:596px;width:9px"></div>
<svg style="left:57px;top:589px" width="17" height="16" viewBox="0 0 17 16"><ellipse cx="11.9" cy="9.6" rx="4.3" ry="5.4" fill="#1c1c1c"/><ellipse cx="11.4" cy="9.2" rx="3.2" ry="4.3" fill="#8e8e8e"/><path d="M13.6 6 C15.4 8 15 12 12.4 13.6 C10.8 14 9.4 13 9 12 C11 13 13.6 11 13.6 6Z" fill="#f4f4f4"/><ellipse cx="10.6" cy="8.4" rx="1.5" ry="2" fill="#b8b8b8"/><path d="M9.8 6.6 C10.8 6 12 6.8 12 8.4 C11.4 7.4 10.6 7.2 9.8 7.6Z" fill="#50507a"/><path d="M2.9 0.8 L5.2 1.2 C6 3.2 8.2 4.2 8.6 6.2 C8.8 7.6 8 8.6 7.2 9.2 C7.4 7.6 6.8 6.2 5.8 5.8 L6.5 12.4 L4.3 12.8 Z" fill="#5a5cc0"/><path d="M4 1.6 L5 11" stroke="#8a8ce8" stroke-width="1"/><path d="M7.4 5.8 C8.4 6.8 8.2 8 7.4 8.8" stroke="#f6c22a" stroke-width="1.3" fill="none"/><ellipse cx="3.7" cy="12.2" rx="3.3" ry="3.1" fill="#5456c2"/><ellipse cx="2.9" cy="11.2" rx="1.6" ry="1.3" fill="#c4c6ff"/></svg>
<div class="cell sel" style="left:75px;top:586px;width:276px"></div>
<div class="t" style="left:77px;top:590px;width:272px;letter-spacing:-0.35px;">Музыка - SACD</div>
<div class="cell sel" style="left:350px;top:586px;width:157px"></div>
<div class="t" style="left:349px;top:591px;width:157px;text-align:center;"><span class="sx" style="transform:scaleX(0.845);transform-origin:50% 50%">HMSMPEG</span></div>
<div class="cell sel" style="left:506px;top:586px;width:133px"></div>
<div class="cell sel" style="left:638px;top:586px;width:328px"></div>
<div class="cell sel" style="left:965px;top:586px;width:118px"></div>
<div class="t" style="left:964px;top:591px;width:118px;text-align:center;letter-spacing:-0.03px;">{ Скрипт }</div>
<div class="cell sel" style="left:1082px;top:586px;width:73px"></div>
<span class="led" style="left:1111px;top:590px"></span>
<div style="left:76px;top:587px;width:1078px;height:20px;border-top:1px dotted #c06010;border-bottom:1px dotted #c06010"></div>
<div class="th" style="left:47px;top:617px;width:9px"></div>
<svg style="left:57px;top:610px" width="17" height="16" viewBox="0 0 17 16"><ellipse cx="11.9" cy="9.6" rx="4.3" ry="5.4" fill="#1c1c1c"/><ellipse cx="11.4" cy="9.2" rx="3.2" ry="4.3" fill="#8e8e8e"/><path d="M13.6 6 C15.4 8 15 12 12.4 13.6 C10.8 14 9.4 13 9 12 C11 13 13.6 11 13.6 6Z" fill="#f4f4f4"/><ellipse cx="10.6" cy="8.4" rx="1.5" ry="2" fill="#b8b8b8"/><path d="M9.8 6.6 C10.8 6 12 6.8 12 8.4 C11.4 7.4 10.6 7.2 9.8 7.6Z" fill="#50507a"/><path d="M2.9 0.8 L5.2 1.2 C6 3.2 8.2 4.2 8.6 6.2 C8.8 7.6 8 8.6 7.2 9.2 C7.4 7.6 6.8 6.2 5.8 5.8 L6.5 12.4 L4.3 12.8 Z" fill="#5a5cc0"/><path d="M4 1.6 L5 11" stroke="#8a8ce8" stroke-width="1"/><path d="M7.4 5.8 C8.4 6.8 8.2 8 7.4 8.8" stroke="#f6c22a" stroke-width="1.3" fill="none"/><ellipse cx="3.7" cy="12.2" rx="3.3" ry="3.1" fill="#5456c2"/><ellipse cx="2.9" cy="11.2" rx="1.6" ry="1.3" fill="#c4c6ff"/></svg>
<div class="cell " style="left:75px;top:607px;width:276px"></div>
<div class="t" style="left:77px;top:611px;width:272px;"><span class="sx" style="transform:scaleX(0.919);transform-origin:0 50%">Музыка - VLC - FFMPEG</span></div>
<div class="cell " style="left:350px;top:607px;width:157px"></div>
<div class="t" style="left:349px;top:612px;width:157px;text-align:center;"><span class="sx" style="transform:scaleX(0.845);transform-origin:50% 50%">HMSMPEG</span></div>
<div class="cell " style="left:506px;top:607px;width:133px"></div>
<div class="cell " style="left:638px;top:607px;width:328px"></div>
<div class="cell " style="left:965px;top:607px;width:118px"></div>
<div class="cell " style="left:1082px;top:607px;width:73px"></div>
<span class="led" style="left:1111px;top:611px"></span>
<div class="th" style="left:47px;top:638px;width:9px"></div>
<svg style="left:57px;top:631px" width="17" height="16" viewBox="0 0 17 16"><ellipse cx="11.9" cy="9.6" rx="4.3" ry="5.4" fill="#1c1c1c"/><ellipse cx="11.4" cy="9.2" rx="3.2" ry="4.3" fill="#8e8e8e"/><path d="M13.6 6 C15.4 8 15 12 12.4 13.6 C10.8 14 9.4 13 9 12 C11 13 13.6 11 13.6 6Z" fill="#f4f4f4"/><ellipse cx="10.6" cy="8.4" rx="1.5" ry="2" fill="#b8b8b8"/><path d="M9.8 6.6 C10.8 6 12 6.8 12 8.4 C11.4 7.4 10.6 7.2 9.8 7.6Z" fill="#50507a"/><path d="M2.9 0.8 L5.2 1.2 C6 3.2 8.2 4.2 8.6 6.2 C8.8 7.6 8 8.6 7.2 9.2 C7.4 7.6 6.8 6.2 5.8 5.8 L6.5 12.4 L4.3 12.8 Z" fill="#5a5cc0"/><path d="M4 1.6 L5 11" stroke="#8a8ce8" stroke-width="1"/><path d="M7.4 5.8 C8.4 6.8 8.2 8 7.4 8.8" stroke="#f6c22a" stroke-width="1.3" fill="none"/><ellipse cx="3.7" cy="12.2" rx="3.3" ry="3.1" fill="#5456c2"/><ellipse cx="2.9" cy="11.2" rx="1.6" ry="1.3" fill="#c4c6ff"/></svg>
<div class="cell " style="left:75px;top:628px;width:276px"></div>
<div class="t" style="left:77px;top:632px;width:272px;letter-spacing:-0.20px;">Музыка - WMA Lossless (DirectShow)</div>
<div class="cell " style="left:350px;top:628px;width:157px"></div>
<div class="t" style="left:349px;top:633px;width:157px;text-align:center;"><span class="sx" style="transform:scaleX(0.845);transform-origin:50% 50%">HMSMPEG</span></div>
<div class="cell " style="left:506px;top:628px;width:133px"></div>
<div class="cell " style="left:638px;top:628px;width:328px"></div>
<div class="cell " style="left:965px;top:628px;width:118px"></div>
<div class="cell " style="left:1082px;top:628px;width:73px"></div>
<span class="led" style="left:1111px;top:632px"></span>
<div class="th" style="left:47px;top:659px;width:9px"></div>
<svg style="left:57px;top:652px" width="17" height="16" viewBox="0 0 17 16"><ellipse cx="11.9" cy="9.6" rx="4.3" ry="5.4" fill="#1c1c1c"/><ellipse cx="11.4" cy="9.2" rx="3.2" ry="4.3" fill="#8e8e8e"/><path d="M13.6 6 C15.4 8 15 12 12.4 13.6 C10.8 14 9.4 13 9 12 C11 13 13.6 11 13.6 6Z" fill="#f4f4f4"/><ellipse cx="10.6" cy="8.4" rx="1.5" ry="2" fill="#b8b8b8"/><path d="M9.8 6.6 C10.8 6 12 6.8 12 8.4 C11.4 7.4 10.6 7.2 9.8 7.6Z" fill="#50507a"/><path d="M2.9 0.8 L5.2 1.2 C6 3.2 8.2 4.2 8.6 6.2 C8.8 7.6 8 8.6 7.2 9.2 C7.4 7.6 6.8 6.2 5.8 5.8 L6.5 12.4 L4.3 12.8 Z" fill="#5a5cc0"/><path d="M4 1.6 L5 11" stroke="#8a8ce8" stroke-width="1"/><path d="M7.4 5.8 C8.4 6.8 8.2 8 7.4 8.8" stroke="#f6c22a" stroke-width="1.3" fill="none"/><ellipse cx="3.7" cy="12.2" rx="3.3" ry="3.1" fill="#5456c2"/><ellipse cx="2.9" cy="11.2" rx="1.6" ry="1.3" fill="#c4c6ff"/></svg>
<div class="cell " style="left:75px;top:649px;width:276px"></div>
<div class="t" style="left:77px;top:653px;width:272px;letter-spacing:-0.30px;">Музыка - APE</div>
<div class="cell " style="left:350px;top:649px;width:157px"></div>
<div class="t" style="left:349px;top:654px;width:157px;text-align:center;"><span class="sx" style="transform:scaleX(0.882);transform-origin:50% 50%">MAC</span></div>
<div class="cell " style="left:506px;top:649px;width:133px"></div>
<div class="cell " style="left:638px;top:649px;width:328px"></div>
<div class="t" style="left:640px;top:653px;width:323px;letter-spacing:-0.05px;">TranscodingCondition := SameText(ExtractFileExt(mpFilePath), &#x27;.ape&#x27;)</div>
<div class="cell " style="left:965px;top:649px;width:118px"></div>
<div class="t" style="left:964px;top:654px;width:118px;text-align:center;letter-spacing:-0.03px;">{ Скрипт }</div>
<div class="cell " style="left:1082px;top:649px;width:73px"></div>
<span class="led" style="left:1111px;top:653px"></span>
<div class="th" style="left:47px;top:680px;width:9px"></div>
<svg style="left:57px;top:673px" width="17" height="16" viewBox="0 0 17 16"><ellipse cx="11.9" cy="9.6" rx="4.3" ry="5.4" fill="#1c1c1c"/><ellipse cx="11.4" cy="9.2" rx="3.2" ry="4.3" fill="#8e8e8e"/><path d="M13.6 6 C15.4 8 15 12 12.4 13.6 C10.8 14 9.4 13 9 12 C11 13 13.6 11 13.6 6Z" fill="#f4f4f4"/><ellipse cx="10.6" cy="8.4" rx="1.5" ry="2" fill="#b8b8b8"/><path d="M9.8 6.6 C10.8 6 12 6.8 12 8.4 C11.4 7.4 10.6 7.2 9.8 7.6Z" fill="#50507a"/><path d="M2.9 0.8 L5.2 1.2 C6 3.2 8.2 4.2 8.6 6.2 C8.8 7.6 8 8.6 7.2 9.2 C7.4 7.6 6.8 6.2 5.8 5.8 L6.5 12.4 L4.3 12.8 Z" fill="#5a5cc0"/><path d="M4 1.6 L5 11" stroke="#8a8ce8" stroke-width="1"/><path d="M7.4 5.8 C8.4 6.8 8.2 8 7.4 8.8" stroke="#f6c22a" stroke-width="1.3" fill="none"/><ellipse cx="3.7" cy="12.2" rx="3.3" ry="3.1" fill="#5456c2"/><ellipse cx="2.9" cy="11.2" rx="1.6" ry="1.3" fill="#c4c6ff"/></svg>
<div class="cell " style="left:75px;top:670px;width:276px"></div>
<div class="t" style="left:77px;top:674px;width:272px;"><span class="sx" style="transform:scaleX(0.914);transform-origin:0 50%">Музыка - RTMPDUMP - FFMPEG</span></div>
<div class="cell " style="left:350px;top:670px;width:157px"></div>
<div class="t" style="left:349px;top:675px;width:157px;text-align:center;"><span class="sx" style="transform:scaleX(0.882);transform-origin:50% 50%">RTMPDUMP</span></div>
<div class="cell " style="left:506px;top:670px;width:133px"></div>
<div class="cell " style="left:638px;top:670px;width:328px"></div>
<div class="cell " style="left:965px;top:670px;width:118px"></div>
<div class="t" style="left:964px;top:675px;width:118px;text-align:center;letter-spacing:-0.03px;">{ Скрипт }</div>
<div class="cell " style="left:1082px;top:670px;width:73px"></div>
<span class="led" style="left:1111px;top:674px"></span>
<div class="th" style="left:47px;top:701px;width:9px"></div>
<svg style="left:57px;top:694px" width="17" height="16" viewBox="0 0 17 16"><ellipse cx="11.9" cy="9.6" rx="4.3" ry="5.4" fill="#1c1c1c"/><ellipse cx="11.4" cy="9.2" rx="3.2" ry="4.3" fill="#8e8e8e"/><path d="M13.6 6 C15.4 8 15 12 12.4 13.6 C10.8 14 9.4 13 9 12 C11 13 13.6 11 13.6 6Z" fill="#f4f4f4"/><ellipse cx="10.6" cy="8.4" rx="1.5" ry="2" fill="#b8b8b8"/><path d="M9.8 6.6 C10.8 6 12 6.8 12 8.4 C11.4 7.4 10.6 7.2 9.8 7.6Z" fill="#50507a"/><path d="M2.9 0.8 L5.2 1.2 C6 3.2 8.2 4.2 8.6 6.2 C8.8 7.6 8 8.6 7.2 9.2 C7.4 7.6 6.8 6.2 5.8 5.8 L6.5 12.4 L4.3 12.8 Z" fill="#5a5cc0"/><path d="M4 1.6 L5 11" stroke="#8a8ce8" stroke-width="1"/><path d="M7.4 5.8 C8.4 6.8 8.2 8 7.4 8.8" stroke="#f6c22a" stroke-width="1.3" fill="none"/><ellipse cx="3.7" cy="12.2" rx="3.3" ry="3.1" fill="#5456c2"/><ellipse cx="2.9" cy="11.2" rx="1.6" ry="1.3" fill="#c4c6ff"/></svg>
<div class="cell " style="left:75px;top:691px;width:276px"></div>
<div class="t" style="left:77px;top:695px;width:272px;letter-spacing:-0.35px;">Музыка (VLC) - LPCM</div>
<div class="cell " style="left:350px;top:691px;width:157px"></div>
<div class="t" style="left:349px;top:696px;width:157px;text-align:center;"><span class="sx" style="transform:scaleX(0.882);transform-origin:50% 50%">VLC</span></div>
<div class="cell " style="left:506px;top:691px;width:133px"></div>
<div class="cell " style="left:638px;top:691px;width:328px"></div>
<div class="cell " style="left:965px;top:691px;width:118px"></div>
<div class="t" style="left:964px;top:696px;width:118px;text-align:center;letter-spacing:-0.03px;">{ Скрипт }</div>
<div class="cell " style="left:1082px;top:691px;width:73px"></div>
<span class="led" style="left:1111px;top:695px"></span>
<div class="th" style="left:47px;top:722px;width:9px"></div>
<svg style="left:57px;top:715px" width="17" height="16" viewBox="0 0 17 16"><ellipse cx="11.9" cy="9.6" rx="4.3" ry="5.4" fill="#1c1c1c"/><ellipse cx="11.4" cy="9.2" rx="3.2" ry="4.3" fill="#8e8e8e"/><path d="M13.6 6 C15.4 8 15 12 12.4 13.6 C10.8 14 9.4 13 9 12 C11 13 13.6 11 13.6 6Z" fill="#f4f4f4"/><ellipse cx="10.6" cy="8.4" rx="1.5" ry="2" fill="#b8b8b8"/><path d="M9.8 6.6 C10.8 6 12 6.8 12 8.4 C11.4 7.4 10.6 7.2 9.8 7.6Z" fill="#50507a"/><path d="M2.9 0.8 L5.2 1.2 C6 3.2 8.2 4.2 8.6 6.2 C8.8 7.6 8 8.6 7.2 9.2 C7.4 7.6 6.8 6.2 5.8 5.8 L6.5 12.4 L4.3 12.8 Z" fill="#5a5cc0"/><path d="M4 1.6 L5 11" stroke="#8a8ce8" stroke-width="1"/><path d="M7.4 5.8 C8.4 6.8 8.2 8 7.4 8.8" stroke="#f6c22a" stroke-width="1.3" fill="none"/><ellipse cx="3.7" cy="12.2" rx="3.3" ry="3.1" fill="#5456c2"/><ellipse cx="2.9" cy="11.2" rx="1.6" ry="1.3" fill="#c4c6ff"/></svg>
<div class="cell " style="left:75px;top:712px;width:276px"></div>
<div class="t" style="left:77px;top:716px;width:272px;letter-spacing:-0.26px;">Музыка (VLC) - MP3</div>
<div class="cell " style="left:350px;top:712px;width:157px"></div>
<div class="t" style="left:349px;top:717px;width:157px;text-align:center;"><span class="sx" style="transform:scaleX(0.882);transform-origin:50% 50%">VLC</span></div>
<div class="cell " style="left:506px;top:712px;width:133px"></div>
<div class="cell " style="left:638px;top:712px;width:328px"></div>
<div class="cell " style="left:965px;top:712px;width:118px"></div>
<div class="t" style="left:964px;top:717px;width:118px;text-align:center;letter-spacing:-0.03px;">{ Скрипт }</div>
<div class="cell " style="left:1082px;top:712px;width:73px"></div>
<span class="led" style="left:1111px;top:716px"></span>
<div class="th" style="left:47px;top:743px;width:9px"></div>
<svg style="left:57px;top:736px" width="17" height="16" viewBox="0 0 17 16"><ellipse cx="11.9" cy="9.6" rx="4.3" ry="5.4" fill="#1c1c1c"/><ellipse cx="11.4" cy="9.2" rx="3.2" ry="4.3" fill="#8e8e8e"/><path d="M13.6 6 C15.4 8 15 12 12.4 13.6 C10.8 14 9.4 13 9 12 C11 13 13.6 11 13.6 6Z" fill="#f4f4f4"/><ellipse cx="10.6" cy="8.4" rx="1.5" ry="2" fill="#b8b8b8"/><path d="M9.8 6.6 C10.8 6 12 6.8 12 8.4 C11.4 7.4 10.6 7.2 9.8 7.6Z" fill="#50507a"/><path d="M2.9 0.8 L5.2 1.2 C6 3.2 8.2 4.2 8.6 6.2 C8.8 7.6 8 8.6 7.2 9.2 C7.4 7.6 6.8 6.2 5.8 5.8 L6.5 12.4 L4.3 12.8 Z" fill="#5a5cc0"/><path d="M4 1.6 L5 11" stroke="#8a8ce8" stroke-width="1"/><path d="M7.4 5.8 C8.4 6.8 8.2 8 7.4 8.8" stroke="#f6c22a" stroke-width="1.3" fill="none"/><ellipse cx="3.7" cy="12.2" rx="3.3" ry="3.1" fill="#5456c2"/><ellipse cx="2.9" cy="11.2" rx="1.6" ry="1.3" fill="#c4c6ff"/></svg>
<div class="cell " style="left:75px;top:733px;width:276px"></div>
<div class="t" style="left:77px;top:737px;width:272px;letter-spacing:-0.26px;">Музыка - AudioCD (VLC)</div>
<div class="cell " style="left:350px;top:733px;width:157px"></div>
<div class="t" style="left:349px;top:738px;width:157px;text-align:center;"><span class="sx" style="transform:scaleX(0.882);transform-origin:50% 50%">VLC</span></div>
<div class="cell " style="left:506px;top:733px;width:133px"></div>
<div class="cell " style="left:638px;top:733px;width:328px"></div>
<div class="cell " style="left:965px;top:733px;width:118px"></div>
<div class="cell " style="left:1082px;top:733px;width:73px"></div>
<span class="led" style="left:1111px;top:737px"></span>
<div class="th" style="left:47px;top:764px;width:9px"></div>
<svg style="left:57px;top:757px" width="17" height="16" viewBox="0 0 17 16"><ellipse cx="11.9" cy="9.6" rx="4.3" ry="5.4" fill="#1c1c1c"/><ellipse cx="11.4" cy="9.2" rx="3.2" ry="4.3" fill="#8e8e8e"/><path d="M13.6 6 C15.4 8 15 12 12.4 13.6 C10.8 14 9.4 13 9 12 C11 13 13.6 11 13.6 6Z" fill="#f4f4f4"/><ellipse cx="10.6" cy="8.4" rx="1.5" ry="2" fill="#b8b8b8"/><path d="M9.8 6.6 C10.8 6 12 6.8 12 8.4 C11.4 7.4 10.6 7.2 9.8 7.6Z" fill="#50507a"/><path d="M2.9 0.8 L5.2 1.2 C6 3.2 8.2 4.2 8.6 6.2 C8.8 7.6 8 8.6 7.2 9.2 C7.4 7.6 6.8 6.2 5.8 5.8 L6.5 12.4 L4.3 12.8 Z" fill="#5a5cc0"/><path d="M4 1.6 L5 11" stroke="#8a8ce8" stroke-width="1"/><path d="M7.4 5.8 C8.4 6.8 8.2 8 7.4 8.8" stroke="#f6c22a" stroke-width="1.3" fill="none"/><ellipse cx="3.7" cy="12.2" rx="3.3" ry="3.1" fill="#5456c2"/><ellipse cx="2.9" cy="11.2" rx="1.6" ry="1.3" fill="#c4c6ff"/></svg>
<div class="cell " style="left:75px;top:754px;width:276px"></div>
<div class="t" style="left:77px;top:758px;width:272px;letter-spacing:-0.09px;">Музыка - Интернет-радио (VLC)</div>
<div class="cell " style="left:350px;top:754px;width:157px"></div>
<div class="t" style="left:349px;top:759px;width:157px;text-align:center;"><span class="sx" style="transform:scaleX(0.882);transform-origin:50% 50%">VLC</span></div>
<div class="cell " style="left:506px;top:754px;width:133px"></div>
<div class="cell " style="left:638px;top:754px;width:328px"></div>
<div class="cell " style="left:965px;top:754px;width:118px"></div>
<div class="cell " style="left:1082px;top:754px;width:73px"></div>
<span class="led" style="left:1111px;top:758px"></span>
<div class="th" style="left:47px;top:785px;width:9px"></div>
<svg style="left:57px;top:778px" width="17" height="16" viewBox="0 0 17 16"><ellipse cx="11.9" cy="9.6" rx="4.3" ry="5.4" fill="#1c1c1c"/><ellipse cx="11.4" cy="9.2" rx="3.2" ry="4.3" fill="#8e8e8e"/><path d="M13.6 6 C15.4 8 15 12 12.4 13.6 C10.8 14 9.4 13 9 12 C11 13 13.6 11 13.6 6Z" fill="#f4f4f4"/><ellipse cx="10.6" cy="8.4" rx="1.5" ry="2" fill="#b8b8b8"/><path d="M9.8 6.6 C10.8 6 12 6.8 12 8.4 C11.4 7.4 10.6 7.2 9.8 7.6Z" fill="#50507a"/><path d="M2.9 0.8 L5.2 1.2 C6 3.2 8.2 4.2 8.6 6.2 C8.8 7.6 8 8.6 7.2 9.2 C7.4 7.6 6.8 6.2 5.8 5.8 L6.5 12.4 L4.3 12.8 Z" fill="#5a5cc0"/><path d="M4 1.6 L5 11" stroke="#8a8ce8" stroke-width="1"/><path d="M7.4 5.8 C8.4 6.8 8.2 8 7.4 8.8" stroke="#f6c22a" stroke-width="1.3" fill="none"/><ellipse cx="3.7" cy="12.2" rx="3.3" ry="3.1" fill="#5456c2"/><ellipse cx="2.9" cy="11.2" rx="1.6" ry="1.3" fill="#c4c6ff"/></svg>
<div class="cell " style="left:75px;top:775px;width:276px"></div>
<div class="t" style="left:77px;top:779px;width:272px;letter-spacing:-0.09px;">Музыка - Интернет-радио (VLC) (lossless 1000+ kbps)</div>
<div class="cell " style="left:350px;top:775px;width:157px"></div>
<div class="t" style="left:349px;top:780px;width:157px;text-align:center;"><span class="sx" style="transform:scaleX(0.882);transform-origin:50% 50%">VLC</span></div>
<div class="cell " style="left:506px;top:775px;width:133px"></div>
<div class="cell " style="left:638px;top:775px;width:328px"></div>
<div class="cell " style="left:965px;top:775px;width:118px"></div>
<div class="cell " style="left:1082px;top:775px;width:73px"></div>
<span class="led" style="left:1111px;top:779px"></span>
<div class="th" style="left:47px;top:806px;width:9px"></div>
<svg style="left:57px;top:799px" width="17" height="16" viewBox="0 0 17 16"><ellipse cx="11.9" cy="9.6" rx="4.3" ry="5.4" fill="#1c1c1c"/><ellipse cx="11.4" cy="9.2" rx="3.2" ry="4.3" fill="#8e8e8e"/><path d="M13.6 6 C15.4 8 15 12 12.4 13.6 C10.8 14 9.4 13 9 12 C11 13 13.6 11 13.6 6Z" fill="#f4f4f4"/><ellipse cx="10.6" cy="8.4" rx="1.5" ry="2" fill="#b8b8b8"/><path d="M9.8 6.6 C10.8 6 12 6.8 12 8.4 C11.4 7.4 10.6 7.2 9.8 7.6Z" fill="#50507a"/><path d="M2.9 0.8 L5.2 1.2 C6 3.2 8.2 4.2 8.6 6.2 C8.8 7.6 8 8.6 7.2 9.2 C7.4 7.6 6.8 6.2 5.8 5.8 L6.5 12.4 L4.3 12.8 Z" fill="#5a5cc0"/><path d="M4 1.6 L5 11" stroke="#8a8ce8" stroke-width="1"/><path d="M7.4 5.8 C8.4 6.8 8.2 8 7.4 8.8" stroke="#f6c22a" stroke-width="1.3" fill="none"/><ellipse cx="3.7" cy="12.2" rx="3.3" ry="3.1" fill="#5456c2"/><ellipse cx="2.9" cy="11.2" rx="1.6" ry="1.3" fill="#c4c6ff"/></svg>
<div class="cell " style="left:75px;top:796px;width:276px"></div>
<div class="t" style="left:77px;top:800px;width:272px;letter-spacing:-0.08px;">Музыка - Интернет-радио (VLC) 128kbps</div>
<div class="cell " style="left:350px;top:796px;width:157px"></div>
<div class="t" style="left:349px;top:801px;width:157px;text-align:center;"><span class="sx" style="transform:scaleX(0.882);transform-origin:50% 50%">VLC</span></div>
<div class="cell " style="left:506px;top:796px;width:133px"></div>
<div class="cell " style="left:638px;top:796px;width:328px"></div>
<div class="cell " style="left:965px;top:796px;width:118px"></div>
<div class="cell " style="left:1082px;top:796px;width:73px"></div>
<span class="led" style="left:1111px;top:800px"></span>
<div class="th" style="left:47px;top:827px;width:9px"></div>
<svg style="left:57px;top:820px" width="17" height="16" viewBox="0 0 17 16"><ellipse cx="11.9" cy="9.6" rx="4.3" ry="5.4" fill="#1c1c1c"/><ellipse cx="11.4" cy="9.2" rx="3.2" ry="4.3" fill="#8e8e8e"/><path d="M13.6 6 C15.4 8 15 12 12.4 13.6 C10.8 14 9.4 13 9 12 C11 13 13.6 11 13.6 6Z" fill="#f4f4f4"/><ellipse cx="10.6" cy="8.4" rx="1.5" ry="2" fill="#b8b8b8"/><path d="M9.8 6.6 C10.8 6 12 6.8 12 8.4 C11.4 7.4 10.6 7.2 9.8 7.6Z" fill="#50507a"/><path d="M2.9 0.8 L5.2 1.2 C6 3.2 8.2 4.2 8.6 6.2 C8.8 7.6 8 8.6 7.2 9.2 C7.4 7.6 6.8 6.2 5.8 5.8 L6.5 12.4 L4.3 12.8 Z" fill="#5a5cc0"/><path d="M4 1.6 L5 11" stroke="#8a8ce8" stroke-width="1"/><path d="M7.4 5.8 C8.4 6.8 8.2 8 7.4 8.8" stroke="#f6c22a" stroke-width="1.3" fill="none"/><ellipse cx="3.7" cy="12.2" rx="3.3" ry="3.1" fill="#5456c2"/><ellipse cx="2.9" cy="11.2" rx="1.6" ry="1.3" fill="#c4c6ff"/></svg>
<div class="cell " style="left:75px;top:817px;width:276px"></div>
<div class="t" style="left:77px;top:821px;width:272px;"><span class="sx" style="transform:scaleX(0.928);transform-origin:0 50%">Музыка - WAVPACK</span></div>
<div class="cell " style="left:350px;top:817px;width:157px"></div>
<div class="t" style="left:349px;top:822px;width:157px;text-align:center;"><span class="sx" style="transform:scaleX(0.889);transform-origin:50% 50%">WVUNPACK</span></div>
<div class="cell " style="left:506px;top:817px;width:133px"></div>
<div class="cell " style="left:638px;top:817px;width:328px"></div>
<div class="t" style="left:640px;top:821px;width:323px;letter-spacing:-0.05px;">TranscodingCondition := SameText(ExtractFileExt(mpFilePath), &#x27;.wv&#x27;)</div>
<div class="cell " style="left:965px;top:817px;width:118px"></div>
<div class="t" style="left:964px;top:822px;width:118px;text-align:center;letter-spacing:-0.03px;">{ Скрипт }</div>
<div class="cell " style="left:1082px;top:817px;width:73px"></div>
<span class="led" style="left:1111px;top:821px"></span>
<div class="th" style="left:34px;top:848px;width:4px"></div>
<svg style="left:39px;top:843px" width="14" height="12" viewBox="0 0 14 12"><rect x="0.5" y="0.5" width="13" height="11" fill="#dfeafc" stroke="#9dbcf0"/><rect x="2" y="2" width="10" height="8" fill="#dfe6ee"/><rect x="2" y="2" width="10" height="3" fill="#c8d6e6"/><path d="M2 6.4 L5.2 5 L8 7 L12 5.8 L12 10 L2 10Z" fill="#1f9a1f"/><path d="M2 8 L12 7.4 L12 10 L2 10Z" fill="#0c7a14"/><ellipse cx="8.6" cy="5.9" rx="2.1" ry="1.5" fill="#f5861c"/><path d="M3 2.6 L6 5" stroke="#70788a" stroke-width=".8"/></svg>
<div class="xb" style="left:22px;top:844px"></div><div style="left:25px;top:849px;width:5px;height:1px;background:#1a2a4a"></div>
<div class="cell" style="left:56px;top:838px;width:1099px"></div>
<div class="t" style="left:58px;top:842px;width:200px;letter-spacing:0.10px;">Фото</div>
<div class="th" style="left:47px;top:869px;width:9px"></div>
<svg style="left:58px;top:864px" width="14" height="12" viewBox="0 0 14 12"><rect x="0.5" y="0.5" width="13" height="11" fill="#dfeafc" stroke="#9dbcf0"/><rect x="2" y="2" width="10" height="8" fill="#dfe6ee"/><rect x="2" y="2" width="10" height="3" fill="#c8d6e6"/><path d="M2 6.4 L5.2 5 L8 7 L12 5.8 L12 10 L2 10Z" fill="#1f9a1f"/><path d="M2 8 L12 7.4 L12 10 L2 10Z" fill="#0c7a14"/><ellipse cx="8.6" cy="5.9" rx="2.1" ry="1.5" fill="#f5861c"/><path d="M3 2.6 L6 5" stroke="#70788a" stroke-width=".8"/></svg>
<div class="cell yel" style="left:75px;top:859px;width:276px"></div>
<div class="t" style="left:77px;top:863px;width:272px;color:#000;">Фото (основной)</div>
<div class="cell yel" style="left:350px;top:859px;width:157px"></div>
<div class="t" style="left:349px;top:864px;width:157px;color:#000;text-align:center;"><span class="sx" style="transform:scaleX(0.845);transform-origin:50% 50%">HMSMPEG</span></div>
<div class="cell yel" style="left:506px;top:859px;width:133px"></div>
<div class="cell yel" style="left:638px;top:859px;width:328px"></div>
<div class="cell yel" style="left:965px;top:859px;width:118px"></div>
<div class="cell yel" style="left:1082px;top:859px;width:73px"></div>
<span class="led" style="left:1111px;top:863px"></span>
<div class="th" style="left:47px;top:890px;width:9px"></div>
<svg style="left:58px;top:885px" width="14" height="12" viewBox="0 0 14 12"><rect x="0.5" y="0.5" width="13" height="11" fill="#dfeafc" stroke="#9dbcf0"/><rect x="2" y="2" width="10" height="8" fill="#dfe6ee"/><rect x="2" y="2" width="10" height="3" fill="#c8d6e6"/><path d="M2 6.4 L5.2 5 L8 7 L12 5.8 L12 10 L2 10Z" fill="#1f9a1f"/><path d="M2 8 L12 7.4 L12 10 L2 10Z" fill="#0c7a14"/><ellipse cx="8.6" cy="5.9" rx="2.1" ry="1.5" fill="#f5861c"/><path d="M3 2.6 L6 5" stroke="#70788a" stroke-width=".8"/></svg>
<div class="cell " style="left:75px;top:880px;width:276px"></div>
<div class="t" style="left:77px;top:884px;width:272px;letter-spacing:-0.16px;">Фото - ImageMagick</div>
<div class="cell pink" style="left:350px;top:880px;width:157px"></div>
<div class="t" style="left:349px;top:885px;width:157px;color:#000;text-align:center;"><span class="sx" style="transform:scaleX(0.901);transform-origin:50% 50%">IMAGEMAGICK</span></div>
<div class="cell " style="left:506px;top:880px;width:133px"></div>
<div class="cell " style="left:638px;top:880px;width:328px"></div>
<div class="cell " style="left:965px;top:880px;width:118px"></div>
<div class="t" style="left:964px;top:885px;width:118px;text-align:center;letter-spacing:-0.03px;">{ Скрипт }</div>
<div class="cell " style="left:1082px;top:880px;width:73px"></div>
<span class="led" style="left:1111px;top:884px"></span>
<div class="gl" style="left:1154px;top:274px;width:1px;height:629px"></div>
<div class="gl" style="left:18px;top:901px;width:1137px;height:1px"></div>
<div class="sb" style="left:1155px;top:274px;width:17px;height:633px"></div>
<div class="thumb" style="left:1156px;top:695px;width:15px;height:195px"></div>
<svg style="left:1159px;top:280px" width="9" height="6" viewBox="0 0 9 6"><path d="M1 5 L4.5 1.5 L8 5" fill="none" stroke="#4a4a4a" stroke-width="2"/></svg>
<svg style="left:1159px;top:896px" width="9" height="6" viewBox="0 0 9 6"><path d="M1 1 L4.5 4.5 L8 1" fill="none" stroke="#4a4a4a" stroke-width="2"/></svg>
<div class="bf" style="left:1174px;top:276px;width:86px;height:629px"></div>
<div class="bb" style="left:1178px;top:280px;width:78px;height:102px"></div><div class="bs" style="left:1178px;top:382px;width:78px"></div>
<div class="t" style="left:1178px;top:341px;width:78px;text-align:center;">Добавить</div>
<svg style="left:1205px;top:311.5px" width="24" height="24" viewBox="0 0 24 24" opacity="1"><path d="M8.6 1.2 H15 V7.8 H22.4 V14.4 H15 V21.4 H8.6 V14.4 H1.4 V7.8 H8.6Z" transform="translate(.5 .7)" fill="#5c5c5c"/><path d="M8.6 1.2 H15 V7.8 H22.4 V14.4 H15 V21.4 H8.6 V14.4 H1.4 V7.8 H8.6Z" fill="url(#pg)"/></svg>
<div class="bb" style="left:1178px;top:383px;width:78px;height:102px"></div><div class="bs" style="left:1178px;top:485px;width:78px"></div>
<div class="t" style="left:1178px;top:444px;width:78px;text-align:center;">Изменить</div>
<svg style="left:1205px;top:414.5px" width="24" height="24" viewBox="0 0 24 24" opacity="1"><rect x="4" y="1.2" width="16" height="20" fill="#f2f2f2"/><rect x="6" y="7" width="12" height="12" fill="url(#gg)"/><rect x="6" y="7" width="12" height="1.4" fill="#d8d8d8"/><path d="M9.2 17.8 L10.6 13.6 L18.6 4.4 L21.6 7 L13.4 16.2Z" fill="#a4a4a4" stroke="#5c5c5c" stroke-width=".7"/><path d="M11 14 L19 5" stroke="#e0e0e0" stroke-width="1.2"/><ellipse cx="20.6" cy="4.6" rx="2.6" ry="2" transform="rotate(40 20.6 4.6)" fill="#454545"/><path d="M9.2 17.8 L10 15.4 L11.4 16.8Z" fill="#2a2a2a"/></svg>
<div class="bb" style="left:1178px;top:486px;width:78px;height:102px"></div><div class="bs" style="left:1178px;top:588px;width:78px"></div>
<div class="t" style="left:1178px;top:547px;width:78px;text-align:center;">Удалить</div>
<svg style="left:1205px;top:517.5px" width="24" height="24" viewBox="0 0 24 24" opacity="1"><path d="M4 3 C5 1.5 7 1 8.2 1.6 L12 7.2 C13.6 5 16 2 18 1.2 C20.4 0.6 23 1.6 23 3.2 C21.6 5.6 18.8 9 17.4 11.4 C19 13 21 15 22 16.6 C22.4 18.8 20.4 21 18.6 20.8 C16.4 20 13.6 18.6 11.8 17.4 C9.8 19 7 21.6 4.6 22 C2.6 22 1 20.4 1.4 18.6 C3 16.6 5.4 14 6.8 12 C5.6 9.8 4.2 7 3.6 5 C3.5 4.2 3.6 3.6 4 3Z" fill="url(#xg)" stroke="#303030" stroke-width="1.1"/></svg>
<div class="bb" style="left:1178px;top:589px;width:78px;height:102px"></div><div class="bs" style="left:1178px;top:691px;width:78px"></div>
<div class="t" style="left:1178px;top:650px;width:78px;text-align:center;">Копировать</div>
<svg style="left:1205px;top:620.5px" width="24" height="24" viewBox="0 0 24 24" opacity="1"><path d="M8.4 1 H17.2 L22.6 6.4 V19.4 H8.4Z" fill="#f0f0f0" stroke="#8e8e8e" stroke-width=".6"/><path d="M17.2 1 V6.4 H22.6Z" fill="#cfcfcf"/><rect x="10" y="8" width="11.4" height="9.6" fill="url(#gg)"/><path d="M1.2 4.6 H9.6 L15.2 10 V22.6 H1.2Z" fill="#f6f6f6" stroke="#8e8e8e" stroke-width=".6"/><path d="M9.6 4.6 V10 H15.2Z" fill="#d4d4d4"/><rect x="2.6" y="11" width="11.2" height="1.4" fill="#dcdcdc"/><rect x="2.6" y="13.6" width="11.2" height="7.2" fill="url(#gg)"/></svg>
<div class="bb" style="left:1178px;top:692px;width:78px;height:102px"></div><div class="bs" style="left:1178px;top:794px;width:78px"></div>
<div class="t" style="left:1178px;top:753px;width:78px;text-align:center;">Сохранить</div>
<svg style="left:1205px;top:723.5px" width="24" height="24" viewBox="0 0 24 24" opacity="1"><path d="M1 3.4 Q1 1 3.4 1 H20.6 Q23 1 23 3.4 V20.6 Q23 23 20.6 23 H4 L1 20.4Z" fill="url(#fg)"/><rect x="4.6" y="1.2" width="15" height="11.4" rx="1" fill="#efefef"/><path d="M7 4.2 H17.4 M7 6.8 H17.4 M7 9.4 H17.4" stroke="#c0c0c0" stroke-width="1.2"/><rect x="6.6" y="15.6" width="11.4" height="7.2" fill="#d4d4d4"/><rect x="8" y="17" width="3.4" height="5" fill="#2a2a2a"/><path d="M12.6 22.8 L17 15.6 H18 V22.8Z" fill="#f4f4f4"/><rect x="20.4" y="3" width="1.2" height="1.6" fill="#2e2e2e"/></svg>
<div class="bb" style="left:1178px;top:795px;width:78px;height:102px"></div><div class="bs" style="left:1178px;top:897px;width:78px"></div>
<div class="t" style="left:1178px;top:856px;width:78px;text-align:center;">Восстановить</div>
<svg style="left:1205px;top:826.5px" width="24" height="24" viewBox="0 0 24 24" opacity="1"><circle cx="12" cy="12" r="10.8" fill="url(#rg)" stroke="#a8a8a8" stroke-width=".7"/><path d="M9.8 5.2 H14.2 V9.8 H18.8 V14.2 H14.2 V18.8 H9.8 V14.2 H5.2 V9.8 H9.8Z" fill="#5a5a5a"/><path d="M9.8 5.2 H14.2 V6.4 H9.8Z M5.2 9.8 H9.8 V11 H5.2Z M14.2 9.8 H18.8 V11 H14.2Z" fill="#3c3c3c"/></svg>
<div class="red" style="left:72px;top:606px;width:634px;height:5px"></div>
<div class="red" style="left:1176px;top:585px;width:80px;height:5px"></div>
<div class="note">Выделяем профиль<br>в списке</div>
<div class="btn" style="left:8px;width:75px"><div class="t" style="left:-2px;top:6px;width:73px;text-align:center;letter-spacing:0.13px;">Загрузить</div></div>
<div class="btn" style="left:88px;width:75px"><div class="t" style="left:-2px;top:6px;width:73px;text-align:center;">Сохранить</div></div>
<div class="btn" style="left:168px;width:89px"><div class="t" style="left:-2px;top:6px;width:87px;text-align:center;">Восстановить</div></div>
<div class="btn" style="left:1110px;width:75px;box-shadow:0 0 0 1px #151515;left:1111px;top:929px;width:73px;height:23px"><div class="t" style="left:-2px;top:5px;width:71px;text-align:center;"><span class="sx" style="transform:scaleX(0.882);transform-origin:50% 50%">OK</span></div></div>
<div class="btn" style="left:1195px;width:75px"><div class="t" style="left:-2px;top:6px;width:73px;text-align:center;letter-spacing:0.04px;">Отмена</div></div>
</body></html>
